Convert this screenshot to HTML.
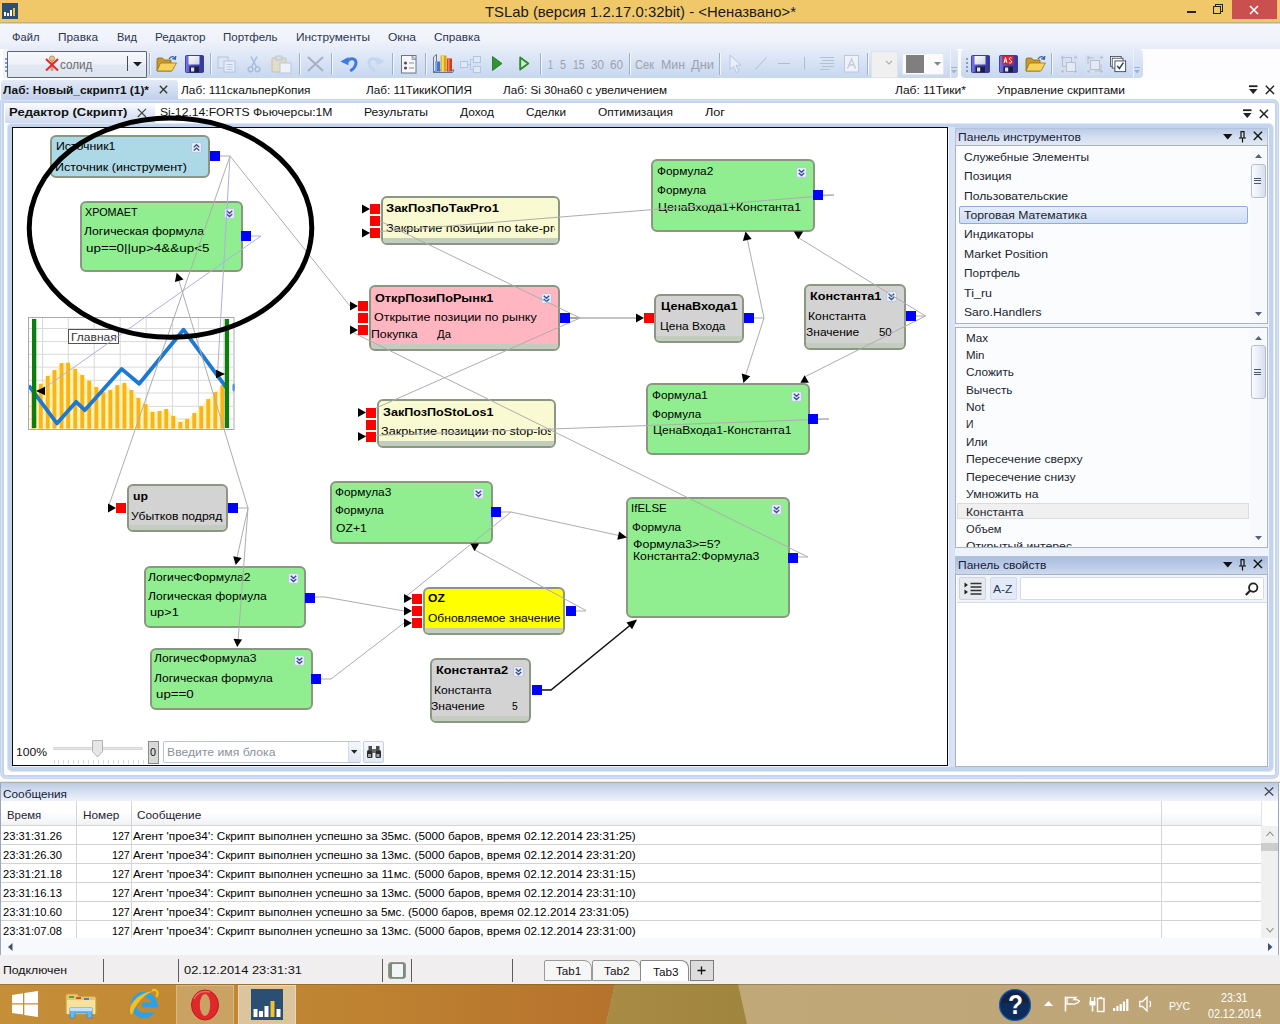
<!DOCTYPE html>
<html><head><meta charset="utf-8"><title>TSLab</title>
<style>
html,body{margin:0;padding:0;}
body{width:1280px;height:1024px;position:relative;overflow:hidden;background:#fff;font-family:"Liberation Sans", sans-serif;}
div,svg{box-sizing:border-box}
</style></head><body>
<div style="position:absolute;left:0px;top:0px;width:1280px;height:24px;background:linear-gradient(#f0c869,#f0c869 91%,#b9ae88 94%,#c9c4b4 97%,#eef0f8)"></div>
<div style="position:absolute;left:485.00px;top:3.00px;font-size:14.6px;line-height:18px;font-weight:400;color:#1a1a1a;white-space:pre;transform:scaleX(1.0184);transform-origin:0 0;">TSLab (версия 1.2.17.0:32bit) - &lt;Неназвано&gt;*</div>
<svg style="position:absolute;left:2px;top:3px" width="16" height="16"><rect width="16" height="16" fill="#2c4f73"/><rect x="2" y="9" width="2" height="4" fill="#fff"/><rect x="5" y="10" width="2" height="3" fill="#fff"/><rect x="8" y="7" width="2" height="6" fill="#fff"/><rect x="11" y="5" width="2" height="8" fill="#f4c430"/></svg>
<div style="position:absolute;left:1187px;top:11px;width:9px;height:2px;background:#222"></div>
<svg style="position:absolute;left:1212px;top:3px" width="12" height="12"><rect x="3.5" y="1.5" width="7" height="7" fill="none" stroke="#222"/><rect x="1.5" y="3.5" width="7" height="7" fill="#f0c869" stroke="#222"/></svg>
<div style="position:absolute;left:1232px;top:0px;width:45px;height:18.6px;background:#c9504e"></div>
<svg style="position:absolute;left:1249px;top:5px" width="10" height="10"><path d="M1 1L9 9M9 1L1 9" stroke="#fff" stroke-width="1.6"/></svg>
<div style="position:absolute;left:0px;top:24px;width:1280px;height:24.5px;background:linear-gradient(#f4f6fc,#eff2fb 70%,#e6ebf6)"></div>
<div style="position:absolute;left:12.00px;top:29.00px;font-size:11.8px;line-height:16px;font-weight:400;color:#2a3550;white-space:pre;transform:scaleX(0.9478);transform-origin:0 0;">Файл</div>
<div style="position:absolute;left:58.00px;top:29.00px;font-size:11.8px;line-height:16px;font-weight:400;color:#2a3550;white-space:pre;transform:scaleX(1.0035);transform-origin:0 0;">Правка</div>
<div style="position:absolute;left:117.00px;top:29.00px;font-size:11.8px;line-height:16px;font-weight:400;color:#2a3550;white-space:pre;transform:scaleX(0.9370);transform-origin:0 0;">Вид</div>
<div style="position:absolute;left:155.00px;top:29.00px;font-size:11.8px;line-height:16px;font-weight:400;color:#2a3550;white-space:pre;transform:scaleX(0.9942);transform-origin:0 0;">Редактор</div>
<div style="position:absolute;left:223.00px;top:29.00px;font-size:11.8px;line-height:16px;font-weight:400;color:#2a3550;white-space:pre;transform:scaleX(0.9792);transform-origin:0 0;">Портфель</div>
<div style="position:absolute;left:296.00px;top:29.00px;font-size:11.8px;line-height:16px;font-weight:400;color:#2a3550;white-space:pre;transform:scaleX(1.0059);transform-origin:0 0;">Инструменты</div>
<div style="position:absolute;left:388.00px;top:29.00px;font-size:11.8px;line-height:16px;font-weight:400;color:#2a3550;white-space:pre;transform:scaleX(1.0211);transform-origin:0 0;">Окна</div>
<div style="position:absolute;left:434.00px;top:29.00px;font-size:11.8px;line-height:16px;font-weight:400;color:#2a3550;white-space:pre;transform:scaleX(0.9939);transform-origin:0 0;">Справка</div>
<div style="position:absolute;left:0px;top:49px;width:1280px;height:31px;background:#fdfdff"></div>
<div style="position:absolute;left:3px;top:49px;width:955px;height:29px;background:linear-gradient(#e6edf9,#d4e0f3 55%,#c8d7ef);border-radius:4px"></div>
<div style="position:absolute;left:961px;top:49px;width:182px;height:29px;background:linear-gradient(#e6edf9,#d4e0f3 55%,#c8d7ef);border-radius:4px"></div>
<div style="position:absolute;left:2.5px;top:49px;width:5px;height:29px;background:#f1f4fa;border-radius:4px 0 0 4px"></div>
<div style="position:absolute;left:4.5px;top:57.5px;width:2px;height:2px;background:#8a9abb"></div>
<div style="position:absolute;left:4.5px;top:61.5px;width:2px;height:2px;background:#8a9abb"></div>
<div style="position:absolute;left:4.5px;top:65.5px;width:2px;height:2px;background:#8a9abb"></div>
<div style="position:absolute;left:4.5px;top:69.5px;width:2px;height:2px;background:#8a9abb"></div>
<div style="position:absolute;left:965.5px;top:57.5px;width:2px;height:2px;background:#8a9abb"></div>
<div style="position:absolute;left:965.5px;top:61.5px;width:2px;height:2px;background:#8a9abb"></div>
<div style="position:absolute;left:965.5px;top:65.5px;width:2px;height:2px;background:#8a9abb"></div>
<div style="position:absolute;left:965.5px;top:69.5px;width:2px;height:2px;background:#8a9abb"></div>
<div style="position:absolute;left:7px;top:50.5px;width:139.8px;height:27px;border:1.3px solid #60656f;background:linear-gradient(#f6f8fc,#edf1f8 48%,#e1e8f3 52%,#dde5f1);border-radius:1px"></div>
<svg style="position:absolute;left:45px;top:55px" width="14" height="17" viewBox="0 0 14 17"><circle cx="7" cy="3.5" r="2.6" fill="#e8c08a" stroke="#a87a3c" stroke-width="0.7"/><rect x="5.6" y="6" width="2.8" height="10" rx="1.2" fill="#c9a468"/><path d="M1 4 L13 15.5 M13 4 L1 15.5" stroke="#e8262c" stroke-width="2"/></svg>
<div style="position:absolute;left:60.00px;top:56.00px;font-size:13.4px;line-height:17px;font-weight:400;color:#6b6b6b;white-space:pre;transform:scaleX(0.8704);transform-origin:0 0;">солид</div>
<div style="position:absolute;left:127px;top:56px;width:1px;height:15px;background:#4a4a4a"></div>
<svg style="position:absolute;left:133px;top:62.2px" width="9" height="5" viewBox="0 0 9 5"><path d="M0 0 L9 0 L4.5 4.5 Z" fill="#1c1c1c"/></svg>
<div style="position:absolute;left:149px;top:53px;width:1px;height:22px;background:#9fb0cc"></div><div style="position:absolute;left:150px;top:53px;width:1px;height:22px;background:#f3f7fd"></div>
<svg style="position:absolute;left:156px;top:55px" width="22" height="18" viewBox="0 0 22 18"><path d="M1 4 L1 16 L15 16 L15 5 L8 5 L6.5 3 L2 3 Z" fill="#c89a2e" stroke="#8a6512" stroke-width="0.8"/><path d="M1 16 L4.5 8 L20.5 8 L16 16 Z" fill="#f6d35a" stroke="#9a7416" stroke-width="0.8"/><path d="M13 4 C15 1,18 1,19 3.5 M19.8 1 L19.3 4.2 L16.2 3.6" fill="none" stroke="#3d5ea8" stroke-width="1.3"/></svg>
<svg style="position:absolute;left:184.5px;top:55px" width="19" height="18" viewBox="0 0 19 18"><defs><linearGradient id="fg184" x1="0" x2="1"><stop offset="0" stop-color="#7a7ae2"/><stop offset="0.35" stop-color="#4a4ac6"/><stop offset="1" stop-color="#34349e"/></linearGradient><linearGradient id="fg184w" x1="0" y1="0" x2="1" y2="1"><stop offset="0" stop-color="#ffffff"/><stop offset="1" stop-color="#cfd2de"/></linearGradient></defs><rect x="0.5" y="0.5" width="18" height="17" rx="1" fill="url(#fg184)" stroke="#2b2b86" stroke-width="0.8"/><rect x="3.5" y="1" width="11" height="8.5" fill="url(#fg184w)"/><rect x="4.5" y="11.5" width="9.5" height="6" fill="#1d1d3c"/><rect x="6" y="12.5" width="3.2" height="4" fill="#dfe0ee"/></svg>
<div style="position:absolute;left:210px;top:53px;width:1px;height:22px;background:#9fb0cc"></div><div style="position:absolute;left:211px;top:53px;width:1px;height:22px;background:#f3f7fd"></div>
<svg style="position:absolute;left:217px;top:56px" width="20" height="17" viewBox="0 0 20 17"><rect x="1" y="1" width="10" height="11" fill="#dbe5f4" stroke="#b3c3dc"/><rect x="7" y="5" width="11" height="11" fill="#e6edf8" stroke="#b3c3dc"/><path d="M9.5 8.5h6M9.5 11h6M9.5 13.5h6" stroke="#b9c7dd"/></svg>
<svg style="position:absolute;left:247px;top:56px" width="14" height="17" viewBox="0 0 14 17"><path d="M4 0.5 L9.5 11 M10 0.5 L4.5 11" stroke="#a9bbd8" stroke-width="1.5" fill="none"/><circle cx="3.5" cy="13.3" r="2.4" fill="none" stroke="#a9bbd8" stroke-width="1.4"/><circle cx="10.5" cy="13.3" r="2.4" fill="none" stroke="#a9bbd8" stroke-width="1.4"/></svg>
<svg style="position:absolute;left:271px;top:55px" width="22" height="19" viewBox="0 0 22 19"><rect x="1" y="3" width="14" height="14" rx="1" fill="#e2dcc6" stroke="#c4c0ae"/><rect x="5" y="1" width="6" height="4" fill="#d9dde6" stroke="#bcc4d2"/><rect x="9" y="8" width="11" height="10" fill="#eef2f9" stroke="#b9c6dc"/></svg>
<div style="position:absolute;left:299px;top:53px;width:1px;height:22px;background:#9fb0cc"></div><div style="position:absolute;left:300px;top:53px;width:1px;height:22px;background:#f3f7fd"></div>
<svg style="position:absolute;left:306px;top:55px" width="19" height="18" viewBox="0 0 19 18"><path d="M2 2 L17 16 M17 2 L2 16" stroke="#a8b0c0" stroke-width="2"/></svg>
<div style="position:absolute;left:331px;top:53px;width:1px;height:22px;background:#9fb0cc"></div><div style="position:absolute;left:332px;top:53px;width:1px;height:22px;background:#f3f7fd"></div>
<svg style="position:absolute;left:339px;top:55px" width="19" height="18" viewBox="0 0 19 18"><path d="M9 5.8 C12.5 2.2 17.8 4 16.8 9 C16.2 12 14 14.2 12.3 15.3" fill="none" stroke="#3d7bdc" stroke-width="3" stroke-linecap="round"/><path d="M1.4 6.4 L9.6 2 L9.4 10.2 Z" fill="#3d7bdc"/></svg>
<svg style="position:absolute;left:366.5px;top:55px" width="19" height="18" viewBox="0 0 19 18"><g transform="translate(19,0) scale(-1,1)"><path d="M9 5.8 C12.5 2.2 17.8 4 16.8 9 C16.2 12 14 14.2 12.3 15.3" fill="none" stroke="#c3d5f0" stroke-width="3" stroke-linecap="round"/><path d="M1.4 6.4 L9.6 2 L9.4 10.2 Z" fill="#c3d5f0"/></g></svg>
<div style="position:absolute;left:392px;top:53px;width:1px;height:22px;background:#9fb0cc"></div><div style="position:absolute;left:393px;top:53px;width:1px;height:22px;background:#f3f7fd"></div>
<svg style="position:absolute;left:401px;top:55px" width="16" height="19" viewBox="0 0 16 19"><rect x="0.5" y="0.5" width="14.5" height="17.5" fill="#f6f7fa" stroke="#70757f"/><path d="M11 0.5 L15 4.5 L11 4.5Z" fill="#c9ced8" stroke="#70757f" stroke-width="0.6"/><circle cx="4.5" cy="8" r="1.6" fill="#555"/><circle cx="4.5" cy="13" r="1.6" fill="#555"/><path d="M8 8h5M8 13h5" stroke="#8a8f99" stroke-width="1.2"/></svg>
<div style="position:absolute;left:425px;top:53px;width:1px;height:22px;background:#9fb0cc"></div><div style="position:absolute;left:426px;top:53px;width:1px;height:22px;background:#f3f7fd"></div>
<svg style="position:absolute;left:432px;top:53px" width="23" height="22" viewBox="0 0 23 22"><path d="M1.5 4 L4.5 1.5 L4.5 17 L1.5 19.5 Z" fill="#dfe5ee" stroke="#5a6880" stroke-width="0.9"/><path d="M1.5 19.5 L4.5 17 L22 17 L20.5 19.5 Z" fill="#c9d0dc" stroke="#5a6880" stroke-width="0.9"/><rect x="3.5" y="8.5" width="4.6" height="10" fill="#3f74d6"/><rect x="3.5" y="8.5" width="1.6" height="10" fill="#7fa6ea"/><rect x="8.6" y="2.5" width="6" height="16" fill="#d9a514"/><rect x="9.6" y="2.5" width="2.2" height="16" fill="#f3dc68"/><rect x="15" y="5.5" width="5" height="13" fill="#d23a1a"/><rect x="15.8" y="5.5" width="1.8" height="13" fill="#ee7e5a"/></svg>
<svg style="position:absolute;left:460px;top:56px" width="22" height="17" viewBox="0 0 22 17"><rect x="0.5" y="5.5" width="7" height="6" fill="#dfe8f6" stroke="#b4c5e0"/><rect x="13.5" y="0.5" width="7" height="6" fill="#dfe8f6" stroke="#b4c5e0"/><rect x="13.5" y="10.5" width="7" height="6" fill="#dfe8f6" stroke="#b4c5e0"/><path d="M7.5 8.5 H10.5 V3.5 H13.5 M10.5 8.5 V13.5 H13.5" fill="none" stroke="#b4c5e0"/></svg>
<svg style="position:absolute;left:492px;top:56px" width="11" height="15" viewBox="0 0 11 15"><path d="M0.5 0.5 L10 7.5 L0.5 14.5 Z" fill="#2f962f" stroke="#1c6e1c" stroke-width="0.8"/></svg>
<svg style="position:absolute;left:519px;top:56px" width="11" height="15" viewBox="0 0 11 15"><path d="M1.2 1.4 L9.3 7.5 L1.2 13.6 Z" fill="#d4ead6" stroke="#2a8c2a" stroke-width="1.9" stroke-linejoin="round"/></svg>
<div style="position:absolute;left:540px;top:53px;width:1px;height:22px;background:#9fb0cc"></div><div style="position:absolute;left:541px;top:53px;width:1px;height:22px;background:#f3f7fd"></div>
<div style="position:absolute;left:548.00px;top:57.00px;font-size:12.4px;line-height:16px;font-weight:400;color:#9da2ac;white-space:pre;transform:scaleX(0.7240);transform-origin:0 0;">1</div>
<div style="position:absolute;left:560.00px;top:57.00px;font-size:12.4px;line-height:16px;font-weight:400;color:#9da2ac;white-space:pre;transform:scaleX(0.8688);transform-origin:0 0;">5</div>
<div style="position:absolute;left:572.50px;top:57.00px;font-size:12.4px;line-height:16px;font-weight:400;color:#9da2ac;white-space:pre;transform:scaleX(0.8335);transform-origin:0 0;">15</div>
<div style="position:absolute;left:591.00px;top:57.00px;font-size:12.4px;line-height:16px;font-weight:400;color:#9da2ac;white-space:pre;transform:scaleX(0.9422);transform-origin:0 0;">30</div>
<div style="position:absolute;left:610.00px;top:57.00px;font-size:12.4px;line-height:16px;font-weight:400;color:#9da2ac;white-space:pre;transform:scaleX(0.9422);transform-origin:0 0;">60</div>
<div style="position:absolute;left:635.00px;top:57.00px;font-size:12.4px;line-height:16px;font-weight:400;color:#9da2ac;white-space:pre;transform:scaleX(0.8935);transform-origin:0 0;">Сек</div>
<div style="position:absolute;left:661.00px;top:57.00px;font-size:12.4px;line-height:16px;font-weight:400;color:#9da2ac;white-space:pre;transform:scaleX(0.9961);transform-origin:0 0;">Мин</div>
<div style="position:absolute;left:691.00px;top:57.00px;font-size:12.4px;line-height:16px;font-weight:400;color:#9da2ac;white-space:pre;transform:scaleX(1.0381);transform-origin:0 0;">Дни</div>
<div style="position:absolute;left:629px;top:53px;width:1px;height:22px;background:#9fb0cc"></div><div style="position:absolute;left:630px;top:53px;width:1px;height:22px;background:#f3f7fd"></div>
<div style="position:absolute;left:719px;top:53px;width:1px;height:22px;background:#9fb0cc"></div><div style="position:absolute;left:720px;top:53px;width:1px;height:22px;background:#f3f7fd"></div>
<svg style="position:absolute;left:729px;top:54px" width="14" height="20" viewBox="0 0 14 20"><path d="M1 1 L1 15.5 L4.6 12.2 L7.4 18.5 L9.8 17.4 L7 11.4 L12 11.2 Z" fill="#e8effa" stroke="#b6c6e0" stroke-width="1"/></svg>
<svg style="position:absolute;left:755px;top:57px" width="12" height="13" viewBox="0 0 12 13"><path d="M0.5 12.5 L11.5 0.5" stroke="#b0bccf" stroke-width="1"/></svg>
<div style="position:absolute;left:777.5px;top:63px;width:12px;height:1px;background:#b0bccf"></div>
<div style="position:absolute;left:804px;top:57px;width:1px;height:13px;background:#b0bccf"></div>
<svg style="position:absolute;left:820px;top:56px" width="15" height="15" viewBox="0 0 15 15"><path d="M0 1.5h14M2 4.5h12M0 7.5h14M2 10.5h12M0 13.5h9" stroke="#b5c0d2" stroke-width="1"/></svg>
<svg style="position:absolute;left:844px;top:55px" width="16" height="18" viewBox="0 0 16 18"><rect x="0.5" y="0.5" width="14" height="16.5" fill="#eef2f9" stroke="#bcc8dc"/><path d="M3.5 13.5 L7.5 4 L11.5 13.5 M5 10h5" stroke="#c3ccdc" stroke-width="1.4" fill="none"/></svg>
<div style="position:absolute;left:867px;top:53px;width:1px;height:22px;background:#9fb0cc"></div><div style="position:absolute;left:868px;top:53px;width:1px;height:22px;background:#f3f7fd"></div>
<div style="position:absolute;left:871px;top:50.5px;width:27px;height:27px;background:#f0f0f0;border:1px solid #dfe3ea"></div>
<svg style="position:absolute;left:885px;top:60px" width="8" height="6" viewBox="0 0 8 6"><path d="M1 1 L4 4 L7 1" stroke="#b0b0b0" fill="none" stroke-width="1.1"/></svg>
<div style="position:absolute;left:902px;top:53px;width:42px;height:21.5px;background:#fbfbfb;border:1px solid #e3e6ec;border-radius:2px"></div>
<div style="position:absolute;left:906px;top:55px;width:18px;height:17.5px;background:#7f7f7f"></div>
<svg style="position:absolute;left:934px;top:62px" width="7" height="4" viewBox="0 0 7 4"><path d="M0 0 L7 0 L3.5 3.8Z" fill="#7a8597"/></svg>
<div style="position:absolute;left:950px;top:49px;width:8px;height:29px;background:linear-gradient(#e2eaf7,#cddaf0);border-left:1px solid #eef3fb;border-radius:0 4px 4px 0"></div>
<svg style="position:absolute;left:951px;top:67px" width="6" height="7" viewBox="0 0 6 7"><path d="M0 0.5h6" stroke="#9db2d6"/><path d="M0 3 L6 3 L3 6.5Z" fill="#9db2d6"/></svg>
<div style="position:absolute;left:1133px;top:49px;width:8px;height:29px;background:linear-gradient(#e2eaf7,#cddaf0);border-left:1px solid #eef3fb;border-radius:0 4px 4px 0"></div>
<svg style="position:absolute;left:1134px;top:67px" width="6" height="7" viewBox="0 0 6 7"><path d="M0 0.5h6" stroke="#9db2d6"/><path d="M0 3 L6 3 L3 6.5Z" fill="#9db2d6"/></svg>
<svg style="position:absolute;left:971px;top:55px" width="19" height="18" viewBox="0 0 19 18"><defs><linearGradient id="fg971" x1="0" x2="1"><stop offset="0" stop-color="#7a7ae2"/><stop offset="0.35" stop-color="#4a4ac6"/><stop offset="1" stop-color="#34349e"/></linearGradient><linearGradient id="fg971w" x1="0" y1="0" x2="1" y2="1"><stop offset="0" stop-color="#ffffff"/><stop offset="1" stop-color="#cfd2de"/></linearGradient></defs><rect x="0.5" y="0.5" width="18" height="17" rx="1" fill="url(#fg971)" stroke="#2b2b86" stroke-width="0.8"/><rect x="3.5" y="1" width="11" height="8.5" fill="url(#fg971w)"/><rect x="4.5" y="11.5" width="9.5" height="6" fill="#1d1d3c"/><rect x="6" y="12.5" width="3.2" height="4" fill="#dfe0ee"/></svg>
<svg style="position:absolute;left:999px;top:55px" width="19" height="18" viewBox="0 0 19 18"><defs><linearGradient id="fg999" x1="0" x2="1"><stop offset="0" stop-color="#7a7ae2"/><stop offset="0.35" stop-color="#4a4ac6"/><stop offset="1" stop-color="#34349e"/></linearGradient><linearGradient id="fg999w" x1="0" y1="0" x2="1" y2="1"><stop offset="0" stop-color="#ffffff"/><stop offset="1" stop-color="#cfd2de"/></linearGradient></defs><rect x="0.5" y="0.5" width="18" height="17" rx="1" fill="url(#fg999)" stroke="#2b2b86" stroke-width="0.8"/><rect x="3.5" y="1" width="11" height="8.5" fill="#d8222c"/><path d="M5 8 L6.5 2.5 L8 8 M5.6 6h1.8 M12.6 3.2 C11.5 2.2 9.8 2.8 10.2 4.2 C10.6 5.4 12.6 5.2 12.6 6.8 C12.6 8.2 10.6 8.4 9.8 7.4" fill="none" stroke="#fff" stroke-width="1"/><rect x="4.5" y="11.5" width="9.5" height="6" fill="#1d1d3c"/><rect x="6" y="12.5" width="3.2" height="4" fill="#dfe0ee"/></svg>
<svg style="position:absolute;left:1025px;top:55px" width="22" height="18" viewBox="0 0 22 18"><path d="M1 4 L1 16 L15 16 L15 5 L8 5 L6.5 3 L2 3 Z" fill="#c89a2e" stroke="#8a6512" stroke-width="0.8"/><path d="M1 16 L4.5 8 L20.5 8 L16 16 Z" fill="#f6d35a" stroke="#9a7416" stroke-width="0.8"/><path d="M13 4 C15 1,18 1,19 3.5 M19.8 1 L19.3 4.2 L16.2 3.6" fill="none" stroke="#3d5ea8" stroke-width="1.3"/></svg>
<div style="position:absolute;left:1051px;top:53px;width:1px;height:22px;background:#9fb0cc"></div><div style="position:absolute;left:1052px;top:53px;width:1px;height:22px;background:#f3f7fd"></div>
<svg style="position:absolute;left:1059px;top:54px" width="19" height="21" viewBox="0 0 19 21"><rect x="0" y="0" width="19" height="21" fill="#d6dfee" opacity="0.6"/><rect x="3.5" y="3.5" width="9" height="9" fill="none" stroke="#b4bfd4"/><rect x="7.5" y="8.5" width="9" height="9" fill="#e4eaf4" stroke="#b4bfd4"/><circle cx="3.5" cy="3.5" r="1.3" fill="#b4bfd4"/><circle cx="16.5" cy="3.5" r="1.3" fill="#b4bfd4"/><circle cx="3.5" cy="17.5" r="1.3" fill="#b4bfd4"/><circle cx="16.5" cy="17.5" r="1.3" fill="#b4bfd4"/></svg>
<svg style="position:absolute;left:1085px;top:54px" width="19" height="21" viewBox="0 0 19 21"><rect x="0" y="0" width="19" height="21" fill="#d6dfee" opacity="0.6"/><rect x="5.5" y="6.5" width="9" height="9" fill="#e4eaf4" stroke="#b4bfd4"/><path d="M3 4h6M3 4v6M16 10v7M10 17h6" stroke="#b4bfd4" fill="none"/><circle cx="3.5" cy="3.5" r="1.3" fill="#b4bfd4"/><circle cx="16.5" cy="3.5" r="1.3" fill="#b4bfd4"/><circle cx="3.5" cy="17.5" r="1.3" fill="#b4bfd4"/><circle cx="16.5" cy="17.5" r="1.3" fill="#b4bfd4"/></svg>
<svg style="position:absolute;left:1110px;top:56px" width="17" height="17" viewBox="0 0 19 19"><rect x="0.5" y="0.5" width="12" height="11" fill="#fff" stroke="#4a5260"/><rect x="2.5" y="2.5" width="12" height="11" fill="#fff" stroke="#4a5260"/><rect x="5.5" y="5.5" width="12" height="12" fill="#fff" stroke="#3a4250"/><path d="M8 11 L10.5 14 L15 7.5" fill="none" stroke="#2a3a6a" stroke-width="1.6"/></svg>
<div style="position:absolute;left:1px;top:80px;width:177px;height:19px;background:linear-gradient(#e3eaf7,#c2d1ea);border-radius:3px 3px 0 0"></div>
<div style="position:absolute;left:3.00px;top:82.00px;font-size:11.8px;line-height:16px;font-weight:700;color:#111;white-space:pre;transform:scaleX(1.0057);transform-origin:0 0;">Лаб: Новый_скрипт1 (1)*</div>
<svg style="position:absolute;left:159px;top:85px" width="9" height="9" viewBox="0 0 9 9"><path d="M0.8 0.8 L8.2 8.2 M8.2 0.8 L0.8 8.2" stroke="#333" stroke-width="1.3"/></svg>
<div style="position:absolute;left:180.50px;top:82.00px;font-size:11.8px;line-height:16px;font-weight:400;color:#111;white-space:pre;transform:scaleX(1.0057);transform-origin:0 0;">Лаб: 111скальперКопия</div>
<div style="position:absolute;left:366.00px;top:82.00px;font-size:11.8px;line-height:16px;font-weight:400;color:#111;white-space:pre;transform:scaleX(0.9974);transform-origin:0 0;">Лаб: 11ТикиКОПИЯ</div>
<div style="position:absolute;left:503.00px;top:82.00px;font-size:11.8px;line-height:16px;font-weight:400;color:#111;white-space:pre;transform:scaleX(0.9921);transform-origin:0 0;">Лаб: Si 30на60 с увеличением</div>
<div style="position:absolute;left:895.00px;top:82.00px;font-size:11.8px;line-height:16px;font-weight:400;color:#111;white-space:pre;transform:scaleX(1.0218);transform-origin:0 0;">Лаб: 11Тики*</div>
<div style="position:absolute;left:997.00px;top:82.00px;font-size:11.8px;line-height:16px;font-weight:400;color:#111;white-space:pre;transform:scaleX(1.0159);transform-origin:0 0;">Управление скриптами</div>
<svg style="position:absolute;left:1249px;top:85px" width="9" height="10" viewBox="0 0 9 10"><path d="M0 1.2h8.5" stroke="#222" stroke-width="1.8"/><path d="M0 4 L8.5 4 L4.25 9 Z" fill="#222"/></svg><svg style="position:absolute;left:1265px;top:85px" width="10" height="10" viewBox="0 0 10 10"><path d="M0.8 0.8 L9 9 M9 0.8 L0.8 9" stroke="#222" stroke-width="1.5"/></svg>
<div style="position:absolute;left:0px;top:98.5px;width:1279px;height:680px;border:4.5px solid #c5d4ee;border-radius:3px 6px 6px 6px;background:#fff"></div>
<div style="position:absolute;left:1px;top:99.5px;width:1277px;height:678px;border:1.5px solid #d9e3f5;border-radius:3px 6px 6px 6px;"></div>
<div style="position:absolute;left:4.7px;top:103px;width:150.5px;height:19.6px;background:linear-gradient(#fcfdff,#e3eaf7 45%,#cfdbf0);border-radius:2px 2px 0 0"></div>
<div style="position:absolute;left:9.40px;top:104.00px;font-size:11.8px;line-height:16px;font-weight:700;color:#111;white-space:pre;transform:scaleX(1.1061);transform-origin:0 0;">Редактор (Скрипт)</div>
<svg style="position:absolute;left:137px;top:108px" width="10" height="10" viewBox="0 0 10 10"><path d="M0.8 0.8 L9 9 M9 0.8 L0.8 9" stroke="#444" stroke-width="1.2"/></svg>
<div style="position:absolute;left:160.00px;top:104.00px;font-size:11.8px;line-height:16px;font-weight:400;color:#111;white-space:pre;transform:scaleX(1.0312);transform-origin:0 0;">Si-12.14:FORTS Фьючерсы:1М</div>
<div style="position:absolute;left:364.00px;top:104.00px;font-size:11.8px;line-height:16px;font-weight:400;color:#111;white-space:pre;transform:scaleX(1.0299);transform-origin:0 0;">Результаты</div>
<div style="position:absolute;left:460.00px;top:104.00px;font-size:11.8px;line-height:16px;font-weight:400;color:#111;white-space:pre;transform:scaleX(1.0145);transform-origin:0 0;">Доход</div>
<div style="position:absolute;left:526.00px;top:104.00px;font-size:11.8px;line-height:16px;font-weight:400;color:#111;white-space:pre;transform:scaleX(0.9946);transform-origin:0 0;">Сделки</div>
<div style="position:absolute;left:598.00px;top:104.00px;font-size:11.8px;line-height:16px;font-weight:400;color:#111;white-space:pre;transform:scaleX(1.0139);transform-origin:0 0;">Оптимизация</div>
<div style="position:absolute;left:705.00px;top:104.00px;font-size:11.8px;line-height:16px;font-weight:400;color:#111;white-space:pre;transform:scaleX(1.0747);transform-origin:0 0;">Лог</div>
<svg style="position:absolute;left:1243px;top:109px" width="9" height="10" viewBox="0 0 9 10"><path d="M0 1.2h8.5" stroke="#222" stroke-width="1.8"/><path d="M0 4 L8.5 4 L4.25 9 Z" fill="#222"/></svg><svg style="position:absolute;left:1259px;top:109px" width="10" height="10" viewBox="0 0 10 10"><path d="M0.8 0.8 L9 9 M9 0.8 L0.8 9" stroke="#222" stroke-width="1.5"/></svg>
<div style="position:absolute;left:6.5px;top:122.5px;width:1267px;height:649px;border:5px solid #c5d4ee;border-radius:5px 6px 6px 6px;background:#eef3fb"></div>
<div style="position:absolute;left:6.5px;top:122.5px;width:1267px;height:649px;border:1.5px solid #dfe8f7;border-radius:5px 6px 6px 6px;"></div>
<div style="position:absolute;left:11.8px;top:127px;width:936.5px;height:639px;border:1.6px solid #0a0a0a;background:#fff"></div>
<div style="position:absolute;left:948.5px;top:127px;width:6px;height:640px;background:#d8e3f6"></div>
<div style="position:absolute;left:955px;top:128px;width:313px;height:17.5px;background:linear-gradient(#bdcce7,#d5dff0 50%,#e4eaf6);border:1px solid #b4c2da;border-bottom:none"></div>
<div style="position:absolute;left:957.50px;top:130.00px;font-size:10.9px;line-height:14px;font-weight:400;color:#15203a;white-space:pre;transform:scaleX(1.1111);transform-origin:0 0;">Панель инструментов</div>
<svg style="position:absolute;left:1222.5px;top:134px" width="10" height="6" viewBox="0 0 10 6"><path d="M0 0 L9.5 0 L4.75 5.5 Z" fill="#111"/></svg><svg style="position:absolute;left:1238.5px;top:131px" width="7" height="12" viewBox="0 0 7 12"><path d="M1.5 0.6h4M2 0.6v6M5 0.6v6.2M0 7h7M3.5 7v4.5" stroke="#111" stroke-width="1.2" fill="none"/></svg><svg style="position:absolute;left:1252.5px;top:131px" width="10" height="10" viewBox="0 0 10 10"><path d="M0.8 0.8 L9 9 M9 0.8 L0.8 9" stroke="#111" stroke-width="1.4"/></svg>
<div style="position:absolute;left:955px;top:145px;width:313px;height:179px;background:#fbfcfe;border:1.5px solid #a9b3c4"></div>
<div style="position:absolute;left:958.5px;top:205.5px;width:289px;height:18px;background:linear-gradient(#e4edfb,#cfdef6);border:1px solid #93abd6;border-radius:2px"></div>
<div style="position:absolute;left:964.00px;top:151.00px;font-size:10.3px;line-height:13px;font-weight:400;color:#20242c;white-space:pre;transform:scaleX(1.1554);transform-origin:0 0;">Служебные Элементы</div>
<div style="position:absolute;left:964.00px;top:170.00px;font-size:10.3px;line-height:13px;font-weight:400;color:#20242c;white-space:pre;transform:scaleX(1.1665);transform-origin:0 0;">Позиция</div>
<div style="position:absolute;left:964.00px;top:190.00px;font-size:10.3px;line-height:13px;font-weight:400;color:#20242c;white-space:pre;transform:scaleX(1.1824);transform-origin:0 0;">Пользовательские</div>
<div style="position:absolute;left:964.00px;top:209.00px;font-size:10.3px;line-height:13px;font-weight:400;color:#20242c;white-space:pre;transform:scaleX(1.1855);transform-origin:0 0;">Торговая Математика</div>
<div style="position:absolute;left:964.00px;top:228.00px;font-size:10.3px;line-height:13px;font-weight:400;color:#20242c;white-space:pre;transform:scaleX(1.1871);transform-origin:0 0;">Индикаторы</div>
<div style="position:absolute;left:964.00px;top:248.00px;font-size:10.3px;line-height:13px;font-weight:400;color:#20242c;white-space:pre;transform:scaleX(1.1836);transform-origin:0 0;">Market Position</div>
<div style="position:absolute;left:964.00px;top:267.00px;font-size:10.3px;line-height:13px;font-weight:400;color:#20242c;white-space:pre;transform:scaleX(1.1528);transform-origin:0 0;">Портфель</div>
<div style="position:absolute;left:964.00px;top:287.00px;font-size:10.3px;line-height:13px;font-weight:400;color:#20242c;white-space:pre;transform:scaleX(1.2133);transform-origin:0 0;">Ti_ru</div>
<div style="position:absolute;left:964.00px;top:306.00px;font-size:10.3px;line-height:13px;font-weight:400;color:#20242c;white-space:pre;transform:scaleX(1.1773);transform-origin:0 0;">Saro.Handlers</div>
<div style="position:absolute;left:1250px;top:147px;width:16px;height:175px;background:#f7f9fc"></div><svg style="position:absolute;left:1254.5px;top:153.5px" width="7" height="4" viewBox="0 0 7 4"><path d="M0 4 L3.5 0 L7 4Z" fill="#56627a"/></svg><svg style="position:absolute;left:1254.5px;top:311.5px" width="7" height="4" viewBox="0 0 7 4"><path d="M0 0 L3.5 4 L7 0Z" fill="#56627a"/></svg><div style="position:absolute;left:1250.5px;top:164px;width:15px;height:33.5px;border:1px solid #b5bfd2;border-radius:3px;background:linear-gradient(90deg,#fafbfe,#e6ebf5 60%,#d6deee)"></div><div style="position:absolute;left:1254px;top:177.75px;width:7px;height:1px;background:#4b566c"></div><div style="position:absolute;left:1254px;top:180.25px;width:7px;height:1px;background:#4b566c"></div><div style="position:absolute;left:1254px;top:182.75px;width:7px;height:1px;background:#4b566c"></div>
<div style="position:absolute;left:955px;top:327px;width:313px;height:221px;background:#fbfcfe;border:1.5px solid #a9b3c4;overflow:hidden"></div>
<div style="position:absolute;left:957px;top:502.7px;width:292px;height:16.5px;background:#f0f0f0;border:1px solid #dcdcdc"></div>
<div style="position:absolute;left:956px;top:328px;width:292px;height:218.5px;overflow:hidden">
<div style="position:absolute;left:10.00px;top:4.00px;font-size:10.3px;line-height:13px;font-weight:400;color:#20242c;white-space:pre;transform:scaleX(1.1309);transform-origin:0 0;">Max</div>
<div style="position:absolute;left:10.00px;top:21.00px;font-size:10.3px;line-height:13px;font-weight:400;color:#20242c;white-space:pre;transform:scaleX(1.1149);transform-origin:0 0;">Min</div>
<div style="position:absolute;left:10.00px;top:38.00px;font-size:10.3px;line-height:13px;font-weight:400;color:#20242c;white-space:pre;transform:scaleX(1.1454);transform-origin:0 0;">Сложить</div>
<div style="position:absolute;left:10.00px;top:56.00px;font-size:10.3px;line-height:13px;font-weight:400;color:#20242c;white-space:pre;transform:scaleX(1.1455);transform-origin:0 0;">Вычесть</div>
<div style="position:absolute;left:10.00px;top:73.00px;font-size:10.3px;line-height:13px;font-weight:400;color:#20242c;white-space:pre;transform:scaleX(1.1540);transform-origin:0 0;">Not</div>
<div style="position:absolute;left:10.00px;top:90.00px;font-size:10.3px;line-height:13px;font-weight:400;color:#20242c;white-space:pre;transform:scaleX(1.0127);transform-origin:0 0;">И</div>
<div style="position:absolute;left:10.00px;top:108.00px;font-size:10.3px;line-height:13px;font-weight:400;color:#20242c;white-space:pre;transform:scaleX(1.1214);transform-origin:0 0;">Или</div>
<div style="position:absolute;left:10.00px;top:125.00px;font-size:10.3px;line-height:13px;font-weight:400;color:#20242c;white-space:pre;transform:scaleX(1.1842);transform-origin:0 0;">Пересечение сверху</div>
<div style="position:absolute;left:10.00px;top:143.00px;font-size:10.3px;line-height:13px;font-weight:400;color:#20242c;white-space:pre;transform:scaleX(1.1828);transform-origin:0 0;">Пересечение снизу</div>
<div style="position:absolute;left:10.00px;top:160.00px;font-size:10.3px;line-height:13px;font-weight:400;color:#20242c;white-space:pre;transform:scaleX(1.1798);transform-origin:0 0;">Умножить на</div>
<div style="position:absolute;left:10.00px;top:178.00px;font-size:10.3px;line-height:13px;font-weight:400;color:#20242c;white-space:pre;transform:scaleX(1.1757);transform-origin:0 0;">Константа</div>
<div style="position:absolute;left:10.00px;top:195.00px;font-size:10.3px;line-height:13px;font-weight:400;color:#20242c;white-space:pre;transform:scaleX(1.0819);transform-origin:0 0;">Объем</div>
<div style="position:absolute;left:10.00px;top:212.00px;font-size:10.3px;line-height:13px;font-weight:400;color:#20242c;white-space:pre;transform:scaleX(1.1848);transform-origin:0 0;">Открытый интерес</div>
</div>
<div style="position:absolute;left:1250px;top:329px;width:16px;height:217px;background:#f7f9fc"></div><svg style="position:absolute;left:1254.5px;top:335.5px" width="7" height="4" viewBox="0 0 7 4"><path d="M0 4 L3.5 0 L7 4Z" fill="#56627a"/></svg><svg style="position:absolute;left:1254.5px;top:535.5px" width="7" height="4" viewBox="0 0 7 4"><path d="M0 0 L3.5 4 L7 0Z" fill="#56627a"/></svg><div style="position:absolute;left:1250.5px;top:345.4px;width:15px;height:53.400000000000034px;border:1px solid #b5bfd2;border-radius:3px;background:linear-gradient(90deg,#fafbfe,#e6ebf5 60%,#d6deee)"></div><div style="position:absolute;left:1254px;top:369.1px;width:7px;height:1px;background:#4b566c"></div><div style="position:absolute;left:1254px;top:371.6px;width:7px;height:1px;background:#4b566c"></div><div style="position:absolute;left:1254px;top:374.1px;width:7px;height:1px;background:#4b566c"></div>
<div style="position:absolute;left:955px;top:555.5px;width:313px;height:18px;background:linear-gradient(#a9bddf,#b9c9e5 45%,#ccd8ed);border:1px solid #b4c2da;border-bottom:none"></div>
<div style="position:absolute;left:957.50px;top:558.00px;font-size:10.9px;line-height:14px;font-weight:400;color:#15203a;white-space:pre;transform:scaleX(1.1045);transform-origin:0 0;">Панель свойств</div>
<svg style="position:absolute;left:1222.5px;top:562px" width="10" height="6" viewBox="0 0 10 6"><path d="M0 0 L9.5 0 L4.75 5.5 Z" fill="#111"/></svg><svg style="position:absolute;left:1238.5px;top:559px" width="7" height="12" viewBox="0 0 7 12"><path d="M1.5 0.6h4M2 0.6v6M5 0.6v6.2M0 7h7M3.5 7v4.5" stroke="#111" stroke-width="1.2" fill="none"/></svg><svg style="position:absolute;left:1252.5px;top:559px" width="10" height="10" viewBox="0 0 10 10"><path d="M0.8 0.8 L9 9 M9 0.8 L0.8 9" stroke="#111" stroke-width="1.4"/></svg>
<div style="position:absolute;left:955px;top:573.5px;width:313px;height:193px;background:#fff;border:1.5px solid #a9b3c4"></div>
<div style="position:absolute;left:956.5px;top:575px;width:310px;height:27.5px;background:#f1f4fa;border-bottom:1px solid #d5dbe6"></div>
<div style="position:absolute;left:958.5px;top:577px;width:27px;height:22.5px;background:#e6e9ee;border:1px solid #cfd4dc;border-radius:2px"></div>
<svg style="position:absolute;left:963.5px;top:582px" width="18" height="13" viewBox="0 0 18 13"><path d="M0.5 0.5 L4 3 L0.5 5.5Z M0.5 7.5 L4 10 L0.5 12.5Z" fill="#222"/><path d="M6.5 1.5h11M6.5 5h11M6.5 8.5h11M6.5 12h11" stroke="#333" stroke-width="1.3"/></svg>
<div style="position:absolute;left:989.5px;top:577px;width:27px;height:22.5px;background:#e3ebf8;border:1px solid #d2dbe9;border-radius:2px"></div>
<div style="position:absolute;left:993.00px;top:582.00px;font-size:10.8px;line-height:14px;font-weight:400;color:#2a3550;white-space:pre;transform:scaleX(1.1203);transform-origin:0 0;">A-Z</div>
<div style="position:absolute;left:1019.5px;top:577px;width:244px;height:22.5px;background:#fff;border:1px solid #d5dae3;border-radius:2px"></div>
<svg style="position:absolute;left:1245px;top:581.5px" width="14" height="14" viewBox="0 0 14 14"><circle cx="8.2" cy="5.6" r="4.2" fill="none" stroke="#222" stroke-width="1.8"/><path d="M5 8.8 L0.8 13" stroke="#222" stroke-width="2.2"/></svg>
<div style="position:absolute;left:16.00px;top:745.00px;font-size:11.6px;line-height:14px;font-weight:400;color:#111;white-space:pre;transform:scaleX(1.0453);transform-origin:0 0;">100%</div>
<div style="position:absolute;left:53px;top:746.5px;width:90px;height:3.5px;background:#e7e7e7;border:1px solid #d6d6d6;border-radius:1px"></div>
<svg style="position:absolute;left:92px;top:740px" width="12" height="18" viewBox="0 0 12 18"><path d="M0.5 0.5 L10.5 0.5 L10.5 11.5 L5.5 17 L0.5 11.5 Z" fill="#e6e6e6" stroke="#b3b3b3"/></svg>
<div style="position:absolute;left:53.5px;top:760px;width:1px;height:4px;background:#dadada"></div>
<div style="position:absolute;left:58.45px;top:760px;width:1px;height:4px;background:#dadada"></div>
<div style="position:absolute;left:63.4px;top:760px;width:1px;height:4px;background:#dadada"></div>
<div style="position:absolute;left:68.35px;top:760px;width:1px;height:4px;background:#dadada"></div>
<div style="position:absolute;left:73.3px;top:760px;width:1px;height:4px;background:#dadada"></div>
<div style="position:absolute;left:78.25px;top:760px;width:1px;height:4px;background:#dadada"></div>
<div style="position:absolute;left:83.2px;top:760px;width:1px;height:4px;background:#dadada"></div>
<div style="position:absolute;left:88.15px;top:760px;width:1px;height:4px;background:#dadada"></div>
<div style="position:absolute;left:93.1px;top:760px;width:1px;height:4px;background:#dadada"></div>
<div style="position:absolute;left:98.05000000000001px;top:760px;width:1px;height:4px;background:#dadada"></div>
<div style="position:absolute;left:103.0px;top:760px;width:1px;height:4px;background:#dadada"></div>
<div style="position:absolute;left:107.95px;top:760px;width:1px;height:4px;background:#dadada"></div>
<div style="position:absolute;left:112.9px;top:760px;width:1px;height:4px;background:#dadada"></div>
<div style="position:absolute;left:117.85000000000001px;top:760px;width:1px;height:4px;background:#dadada"></div>
<div style="position:absolute;left:122.8px;top:760px;width:1px;height:4px;background:#dadada"></div>
<div style="position:absolute;left:127.75px;top:760px;width:1px;height:4px;background:#dadada"></div>
<div style="position:absolute;left:132.7px;top:760px;width:1px;height:4px;background:#dadada"></div>
<div style="position:absolute;left:137.65px;top:760px;width:1px;height:4px;background:#dadada"></div>
<div style="position:absolute;left:142.60000000000002px;top:760px;width:1px;height:4px;background:#dadada"></div>
<div style="position:absolute;left:148px;top:740.5px;width:10.5px;height:23px;background:#d8d8d8;border:1px solid #8a8a8a"></div>
<div style="position:absolute;left:150.30px;top:745.00px;font-size:11px;line-height:14px;font-weight:400;color:#111;white-space:pre;transform:scaleX(0.9796);transform-origin:0 0;">0</div>
<div style="position:absolute;left:162.5px;top:741px;width:198.5px;height:22px;background:#fff;border:1px solid #b8c4d8;border-radius:2px"></div>
<div style="position:absolute;left:167.00px;top:745.00px;font-size:10.6px;line-height:14px;font-weight:400;color:#8d939c;white-space:pre;transform:scaleX(1.1502);transform-origin:0 0;">Введите имя блока</div>
<div style="position:absolute;left:347.5px;top:742px;width:13px;height:20px;background:linear-gradient(#f4f7fc,#dfe7f4);border-left:1px solid #d4dbe8"></div>
<svg style="position:absolute;left:350.5px;top:750px" width="7" height="4" viewBox="0 0 7 4"><path d="M0 0 L6.5 0 L3.25 3.8Z" fill="#222"/></svg>
<div style="position:absolute;left:362.5px;top:741px;width:21.5px;height:22px;background:linear-gradient(#f7f9fd,#e3eaf5);border:1px solid #c5cfe0;border-radius:2px"></div>
<svg style="position:absolute;left:365.5px;top:744.5px" width="16" height="14" viewBox="0 0 16 14"><rect x="1" y="5" width="5.5" height="8" rx="1.5" fill="#2a2a2a"/><rect x="9.5" y="5" width="5.5" height="8" rx="1.5" fill="#2a2a2a"/><rect x="2.5" y="1" width="3.5" height="5" fill="#4a4a4a"/><rect x="10" y="1" width="3.5" height="5" fill="#4a4a4a"/><rect x="6" y="4" width="4" height="4" fill="#6a6a6a"/><rect x="2" y="9" width="3" height="3" fill="#9aa"/><rect x="10.5" y="9" width="3" height="3" fill="#9aa"/></svg>
<div style="position:absolute;left:0px;top:778.5px;width:1280px;height:4px;background:linear-gradient(#fdfdfd,#f2f2f2 60%,#8e8e8e)"></div>
<div style="position:absolute;left:0px;top:782.5px;width:1279px;height:18.5px;background:linear-gradient(#bccbe5,#d6e0f1 50%,#eef2fa);border-left:1px solid #9aa6ba;border-right:1px solid #9aa6ba"></div>
<div style="position:absolute;left:3.00px;top:786.00px;font-size:11.8px;line-height:16px;font-weight:400;color:#15203a;white-space:pre;transform:scaleX(0.9995);transform-origin:0 0;">Сообщения</div>
<svg style="position:absolute;left:1264px;top:786.5px" width="10" height="9" viewBox="0 0 10 9"><path d="M0.8 0.5 L9.2 8.5 M9.2 0.5 L0.8 8.5" stroke="#3c4250" stroke-width="1.2"/></svg>
<div style="position:absolute;left:0px;top:801px;width:1279px;height:154px;background:#fff;border-left:1px solid #9aa6ba;border-right:1px solid #9aa6ba;border-bottom:1px solid #9aa6ba"></div>
<div style="position:absolute;left:1px;top:801px;width:1260px;height:24.5px;background:linear-gradient(#fff,#fff 45%,#f1f2f4);border-bottom:1px solid #d5d5d5"></div>
<div style="position:absolute;left:76px;top:801px;width:1px;height:137px;background:#d6d6d6"></div>
<div style="position:absolute;left:130.5px;top:801px;width:1px;height:137px;background:#d6d6d6"></div>
<div style="position:absolute;left:1161px;top:801px;width:1px;height:137px;background:#d6d6d6"></div>
<div style="position:absolute;left:1260.5px;top:801px;width:1px;height:24.5px;background:#e3e3e3"></div>
<div style="position:absolute;left:1px;top:844.3px;width:1260px;height:1px;background:#d3d3d3"></div>
<div style="position:absolute;left:1px;top:863.3px;width:1260px;height:1px;background:#d3d3d3"></div>
<div style="position:absolute;left:1px;top:882.3px;width:1260px;height:1px;background:#d3d3d3"></div>
<div style="position:absolute;left:1px;top:901.2px;width:1260px;height:1px;background:#d3d3d3"></div>
<div style="position:absolute;left:1px;top:920.3px;width:1260px;height:1px;background:#d3d3d3"></div>
<div style="position:absolute;left:7.00px;top:807.00px;font-size:11.8px;line-height:16px;font-weight:400;color:#1c2238;white-space:pre;transform:scaleX(0.9648);transform-origin:0 0;">Время</div>
<div style="position:absolute;left:82.50px;top:807.00px;font-size:11.8px;line-height:16px;font-weight:400;color:#1c2238;white-space:pre;transform:scaleX(0.9983);transform-origin:0 0;">Номер</div>
<div style="position:absolute;left:137.00px;top:807.00px;font-size:11.8px;line-height:16px;font-weight:400;color:#1c2238;white-space:pre;transform:scaleX(1.0007);transform-origin:0 0;">Сообщение</div>
<div style="position:absolute;left:0;top:826px;width:1260px;height:112px;overflow:hidden">
<div style="position:absolute;left:3.00px;top:2.00px;font-size:11.8px;line-height:16px;font-weight:400;color:#000;white-space:pre;transform:scaleX(0.9466);transform-origin:0 0;">23:31:31.26</div>
<div style="position:absolute;left:111.75px;top:2.00px;font-size:11.8px;line-height:16px;font-weight:400;color:#000;white-space:pre;transform:scaleX(0.9016);transform-origin:0 0;">127</div>
<div style="position:absolute;left:133.25px;top:2.00px;font-size:11.8px;line-height:16px;font-weight:400;color:#000;white-space:pre;transform:scaleX(0.9972);transform-origin:0 0;">Агент 'прое34': Скрипт выполнен успешно за 35мс. (5000 баров, время 02.12.2014 23:31:25)</div>
<div style="position:absolute;left:3.00px;top:21.00px;font-size:11.8px;line-height:16px;font-weight:400;color:#000;white-space:pre;transform:scaleX(0.9466);transform-origin:0 0;">23:31:26.30</div>
<div style="position:absolute;left:111.75px;top:21.00px;font-size:11.8px;line-height:16px;font-weight:400;color:#000;white-space:pre;transform:scaleX(0.9016);transform-origin:0 0;">127</div>
<div style="position:absolute;left:133.25px;top:21.00px;font-size:11.8px;line-height:16px;font-weight:400;color:#000;white-space:pre;transform:scaleX(0.9972);transform-origin:0 0;">Агент 'прое34': Скрипт выполнен успешно за 13мс. (5000 баров, время 02.12.2014 23:31:20)</div>
<div style="position:absolute;left:3.00px;top:40.00px;font-size:11.8px;line-height:16px;font-weight:400;color:#000;white-space:pre;transform:scaleX(0.9466);transform-origin:0 0;">23:31:21.18</div>
<div style="position:absolute;left:111.75px;top:40.00px;font-size:11.8px;line-height:16px;font-weight:400;color:#000;white-space:pre;transform:scaleX(0.9016);transform-origin:0 0;">127</div>
<div style="position:absolute;left:133.25px;top:40.00px;font-size:11.8px;line-height:16px;font-weight:400;color:#000;white-space:pre;transform:scaleX(0.9989);transform-origin:0 0;">Агент 'прое34': Скрипт выполнен успешно за 11мс. (5000 баров, время 02.12.2014 23:31:15)</div>
<div style="position:absolute;left:3.00px;top:59.00px;font-size:11.8px;line-height:16px;font-weight:400;color:#000;white-space:pre;transform:scaleX(0.9466);transform-origin:0 0;">23:31:16.13</div>
<div style="position:absolute;left:111.75px;top:59.00px;font-size:11.8px;line-height:16px;font-weight:400;color:#000;white-space:pre;transform:scaleX(0.9016);transform-origin:0 0;">127</div>
<div style="position:absolute;left:133.25px;top:59.00px;font-size:11.8px;line-height:16px;font-weight:400;color:#000;white-space:pre;transform:scaleX(0.9972);transform-origin:0 0;">Агент 'прое34': Скрипт выполнен успешно за 13мс. (5000 баров, время 02.12.2014 23:31:10)</div>
<div style="position:absolute;left:3.00px;top:78.00px;font-size:11.8px;line-height:16px;font-weight:400;color:#000;white-space:pre;transform:scaleX(0.9466);transform-origin:0 0;">23:31:10.60</div>
<div style="position:absolute;left:111.75px;top:78.00px;font-size:11.8px;line-height:16px;font-weight:400;color:#000;white-space:pre;transform:scaleX(0.9016);transform-origin:0 0;">127</div>
<div style="position:absolute;left:133.25px;top:78.00px;font-size:11.8px;line-height:16px;font-weight:400;color:#000;white-space:pre;transform:scaleX(0.9969);transform-origin:0 0;">Агент 'прое34': Скрипт выполнен успешно за 5мс. (5000 баров, время 02.12.2014 23:31:05)</div>
<div style="position:absolute;left:3.00px;top:97.00px;font-size:11.8px;line-height:16px;font-weight:400;color:#000;white-space:pre;transform:scaleX(0.9466);transform-origin:0 0;">23:31:07.08</div>
<div style="position:absolute;left:111.75px;top:97.00px;font-size:11.8px;line-height:16px;font-weight:400;color:#000;white-space:pre;transform:scaleX(0.9016);transform-origin:0 0;">127</div>
<div style="position:absolute;left:133.25px;top:97.00px;font-size:11.8px;line-height:16px;font-weight:400;color:#000;white-space:pre;transform:scaleX(0.9972);transform-origin:0 0;">Агент 'прое34': Скрипт выполнен успешно за 13мс. (5000 баров, время 02.12.2014 23:31:00)</div>
</div>
<div style="position:absolute;left:1261px;top:826px;width:17px;height:112px;background:#f0f0f0"></div>
<div style="position:absolute;left:1261px;top:843px;width:17px;height:8px;background:#cdcdcd"></div>
<svg style="position:absolute;left:1265.5px;top:831px" width="8" height="6" viewBox="0 0 8 6"><path d="M0.5 5 L4 1 L7.5 5" fill="none" stroke="#8a8a8a" stroke-width="1.1"/></svg>
<svg style="position:absolute;left:1265.5px;top:927px" width="8" height="6" viewBox="0 0 8 6"><path d="M0.5 1 L4 5 L7.5 1" fill="none" stroke="#8a8a8a" stroke-width="1.1"/></svg>
<div style="position:absolute;left:1px;top:938px;width:1277px;height:16.5px;background:#f7f9fd"></div>
<svg style="position:absolute;left:7.5px;top:943px" width="5" height="8" viewBox="0 0 5 8"><path d="M4.5 0 L0 4 L4.5 8Z" fill="#3e5278"/></svg>
<svg style="position:absolute;left:1268px;top:943px" width="5" height="8" viewBox="0 0 5 8"><path d="M0 0 L4.5 4 L0 8Z" fill="#3e5278"/></svg>
<div style="position:absolute;left:0px;top:955px;width:1280px;height:29px;background:#f0eeee"></div>
<div style="position:absolute;left:102.5px;top:958.5px;width:1px;height:23px;background:#5c5c5c"></div>
<div style="position:absolute;left:177.5px;top:958.5px;width:1px;height:23px;background:#5c5c5c"></div>
<div style="position:absolute;left:382.3px;top:958.5px;width:1px;height:23px;background:#5c5c5c"></div>
<div style="position:absolute;left:411.4px;top:958.5px;width:1px;height:23px;background:#5c5c5c"></div>
<div style="position:absolute;left:512.3px;top:958.5px;width:1px;height:23px;background:#5c5c5c"></div>
<div style="position:absolute;left:3.00px;top:962.00px;font-size:11.8px;line-height:16px;font-weight:400;color:#111;white-space:pre;transform:scaleX(1.0380);transform-origin:0 0;">Подключен</div>
<div style="position:absolute;left:183.75px;top:963.00px;font-size:10.6px;line-height:14px;font-weight:400;color:#111;white-space:pre;transform:scaleX(1.2140);transform-origin:0 0;">02.12.2014 23:31:31</div>
<div style="position:absolute;left:388px;top:961.5px;width:18px;height:17px;background:#7f8a7f;border:1.5px solid #8f9a92;border-radius:3px"></div>
<div style="position:absolute;left:391.5px;top:964px;width:11px;height:12.5px;background:#f2f4f8;border-radius:1px"></div>
<div style="position:absolute;left:543.5px;top:959.5px;width:48.5px;height:21.5px;background:#f6f6f6;border:1px solid #9a9a9a;border-radius:2px 8px 0 0"></div>
<div style="position:absolute;left:591.5px;top:959.5px;width:49px;height:21.5px;background:#f6f6f6;border:1px solid #9a9a9a;border-radius:2px 8px 0 0"></div>
<div style="position:absolute;left:640px;top:959.5px;width:49px;height:21.5px;background:#fff;border:1.5px solid #8a8a8a;border-bottom:none;border-radius:2px 8px 0 0"></div>
<div style="position:absolute;left:689.5px;top:959.5px;width:24px;height:21px;background:#dcdcdc;border:1px solid #7c7c7c"></div>
<div style="position:absolute;left:556.00px;top:963.00px;font-size:11.8px;line-height:16px;font-weight:400;color:#111;white-space:pre;transform:scaleX(0.9846);transform-origin:0 0;">Tab1</div>
<div style="position:absolute;left:604.00px;top:963.00px;font-size:11.8px;line-height:16px;font-weight:400;color:#111;white-space:pre;transform:scaleX(0.9963);transform-origin:0 0;">Tab2</div>
<div style="position:absolute;left:653.00px;top:964.00px;font-size:11.8px;line-height:16px;font-weight:400;color:#111;white-space:pre;transform:scaleX(0.9963);transform-origin:0 0;">Tab3</div>
<svg style="position:absolute;left:697px;top:966px" width="9" height="9" viewBox="0 0 9 9"><path d="M4.5 0.5v8M0.5 4.5h8" stroke="#111" stroke-width="1.3"/></svg>
<svg style="position:absolute;left:0;top:984px" width="1280" height="40"><defs><linearGradient id="tg1" x1="0" x2="1"><stop offset="0" stop-color="#c58e38"/><stop offset="0.55" stop-color="#bf8432"/><stop offset="1" stop-color="#b5722c"/></linearGradient><linearGradient id="tg2" x1="0" x2="1"><stop offset="0" stop-color="#a88b44"/><stop offset="1" stop-color="#a0853f"/></linearGradient><linearGradient id="tg3" x1="0" x2="1"><stop offset="0" stop-color="#c6ac7a"/><stop offset="1" stop-color="#bda578"/></linearGradient></defs><rect width="1280" height="40" fill="url(#tg3)"/><polygon points="0,0 615,0 606,40 0,40" fill="url(#tg1)"/><polygon points="615,0 738,0 747,40 606,40" fill="url(#tg2)"/><rect width="1280" height="1" fill="#5a4a20" opacity="0.35"/></svg>
<svg style="position:absolute;left:12px;top:991px" width="26" height="26" viewBox="0 0 26 26"><path d="M0 4 L11 2.3 L11 12.3 L0 12.3Z M12.3 2.1 L26 0 L26 12.3 L12.3 12.3Z M0 13.6 L11 13.6 L11 23.6 L0 22Z M12.3 13.6 L26 13.6 L26 26 L12.3 23.9Z" fill="#fff"/></svg>
<svg style="position:absolute;left:65px;top:992px" width="33" height="27" viewBox="0 0 33 27"><path d="M1 4 Q1 2 3 2 L12 2 L14 4.5 L29 4.5 Q31 4.5 31 6.5 L31 22 L1 22Z" fill="#e8c66a" stroke="#c9a443" stroke-width="0.8"/><rect x="2" y="8" width="28" height="14" fill="#f6e29a"/><rect x="4" y="4" width="5" height="2" fill="#5aa04a"/><rect x="11" y="5" width="5" height="2" fill="#d0503c"/><rect x="19" y="6" width="5" height="2" fill="#3b86c8"/><path d="M5 16 L27 16 L27 26 L22 26 L22 21 L10 21 L10 26 L5 26Z" fill="#6fb6e8" stroke="#3b86c8" stroke-width="0.8"/><rect x="5" y="16" width="22" height="3" fill="#bfe2f8"/></svg>
<svg style="position:absolute;left:128px;top:988px" width="32" height="32" viewBox="0 0 32 32"><circle cx="16" cy="17" r="10.5" fill="none" stroke="#2ea1e4" stroke-width="5.5"/><rect x="14" y="14.5" width="16" height="5" fill="#2ea1e4"/><path d="M16 19.5 L30 19.5 L30 28 L18 30Z" fill="#c08632" opacity="0"/><rect x="19" y="19.5" width="13" height="5" fill="#c18a36"/><path d="M3 27 C-2 17 12 3 27 3 C22 3 9 12 5 25" fill="#f0c020"/><path d="M24 2 C29 1 31 4 28.5 9" fill="none" stroke="#f0c020" stroke-width="2.2"/></svg>
<div style="position:absolute;left:176px;top:985px;width:58px;height:39px;background:#c9a264;border:1px solid #d8b880;border-bottom:none"></div>
<svg style="position:absolute;left:190px;top:989px" width="30" height="32" viewBox="0 0 30 32"><ellipse cx="15" cy="16" rx="13.5" ry="15" fill="#e0282a"/><ellipse cx="15" cy="16" rx="5.2" ry="11" fill="#c9a264"/><ellipse cx="15" cy="16" rx="13.5" ry="15" fill="none" stroke="#b81c1e" stroke-width="1"/><path d="M4 10 C7 3 14 1.5 20 3" stroke="#f48080" stroke-width="1.5" fill="none" opacity="0.7"/></svg>
<div style="position:absolute;left:238px;top:985px;width:58px;height:39px;background:#dcc49c;border:1px solid #ead8b8;border-bottom:none"></div>
<svg style="position:absolute;left:251px;top:988.5px" width="32" height="31" viewBox="0 0 32 31"><rect width="32" height="31" fill="#2b4f72"/><rect x="2.5" y="20" width="4" height="8" fill="#fff"/><rect x="8" y="22" width="4" height="6" fill="#fff"/><rect x="13.5" y="17" width="4" height="11" fill="#fff"/><rect x="19.5" y="12" width="4" height="16" fill="#f2c12e"/><rect x="25.5" y="20" width="4" height="8" fill="#fff"/></svg>
<svg style="position:absolute;left:999px;top:989px" width="32" height="32" viewBox="0 0 32 32"><circle cx="16" cy="16" r="15.5" fill="#0d2c5c"/><circle cx="16" cy="16" r="15.5" fill="none" stroke="#1f5aa8" stroke-width="1.2"/><path d="M2 14 A14.5 14.5 0 0 1 30 14 Z" fill="#1a1a2e" opacity="0.55"/></svg>
<div style="position:absolute;left:1007.50px;top:989.00px;font-size:27px;line-height:32px;font-weight:700;color:#fff;white-space:pre;transform:scaleX(0.9091);transform-origin:0 0;">?</div>
<svg style="position:absolute;left:1044px;top:1001px" width="9" height="5" viewBox="0 0 9 5"><path d="M0 5 L4.5 0 L9 5Z" fill="#fff"/></svg>
<svg style="position:absolute;left:1064px;top:996px" width="16" height="16" viewBox="0 0 16 16"><path d="M1.5 0.5 V15.5" stroke="#fff" stroke-width="1.6"/><path d="M3 1.5 H12 L10 3.5 C12 3.5 14.5 4 15.5 5 C13.5 8 9 8.5 7 8 H3Z" fill="none" stroke="#fff" stroke-width="1.3"/></svg>
<svg style="position:absolute;left:1089px;top:996px" width="16" height="17" viewBox="0 0 16 17"><rect x="8.5" y="2.5" width="6.5" height="13" fill="none" stroke="#fff" stroke-width="1.4"/><rect x="10.5" y="0.8" width="2.5" height="1.8" fill="#fff"/><path d="M1.5 1v4M5.5 1v4" stroke="#fff" stroke-width="1.4"/><rect x="0.5" y="5" width="6" height="4.5" fill="#fff"/><path d="M3.5 9.5v6" stroke="#fff" stroke-width="1.6"/></svg>
<svg style="position:absolute;left:1113px;top:999px" width="16" height="12" viewBox="0 0 16 12"><rect x="0" y="9" width="2.2" height="3" fill="#fff"/><rect x="3.3" y="7" width="2.2" height="5" fill="#fff"/><rect x="6.6" y="5" width="2.2" height="7" fill="#fff"/><rect x="9.9" y="2.5" width="2.2" height="9.5" fill="#fff"/><rect x="13.2" y="0" width="2.2" height="12" fill="#fff"/></svg>
<svg style="position:absolute;left:1139px;top:996px" width="14" height="16" viewBox="0 0 14 16"><path d="M0.8 5.5 H3.5 L8 1 V15 L3.5 10.5 H0.8Z" fill="none" stroke="#fff" stroke-width="1.3"/><path d="M10.5 5 C12 6.5 12 9.5 10.5 11" fill="none" stroke="#fff" stroke-width="1.2"/></svg>
<div style="position:absolute;left:1168.50px;top:999.00px;font-size:11.6px;line-height:14px;font-weight:400;color:#fff;white-space:pre;transform:scaleX(0.9044);transform-origin:0 0;">РУС</div>
<div style="position:absolute;left:1221.00px;top:990.00px;font-size:12.6px;line-height:16px;font-weight:400;color:#fff;white-space:pre;transform:scaleX(0.8409);transform-origin:0 0;">23:31</div>
<div style="position:absolute;left:1207.50px;top:1006.00px;font-size:12.6px;line-height:16px;font-weight:400;color:#fff;white-space:pre;transform:scaleX(0.8488);transform-origin:0 0;">02.12.2014</div>
<svg style="position:absolute;left:0;top:0" width="960" height="780">
<rect x="28.5" y="317.5" width="205.5" height="112" fill="#fff" stroke="#a9a9a9" stroke-width="1"/>
<line x1="42.5" y1="318" x2="42.5" y2="429" stroke="#d9d9d9" stroke-width="1"/>
<line x1="68.3" y1="318" x2="68.3" y2="429" stroke="#d9d9d9" stroke-width="1"/>
<line x1="94.2" y1="318" x2="94.2" y2="429" stroke="#d9d9d9" stroke-width="1"/>
<line x1="120.2" y1="318" x2="120.2" y2="429" stroke="#d9d9d9" stroke-width="1"/>
<line x1="146.2" y1="318" x2="146.2" y2="429" stroke="#d9d9d9" stroke-width="1"/>
<line x1="172.6" y1="318" x2="172.6" y2="429" stroke="#d9d9d9" stroke-width="1"/>
<line x1="198.4" y1="318" x2="198.4" y2="429" stroke="#d9d9d9" stroke-width="1"/>
<line x1="223.9" y1="318" x2="223.9" y2="429" stroke="#d9d9d9" stroke-width="1"/>
<line x1="29" y1="328.5" x2="233.5" y2="328.5" stroke="#d9d9d9" stroke-width="1"/>
<line x1="29" y1="341.6" x2="233.5" y2="341.6" stroke="#d9d9d9" stroke-width="1"/>
<line x1="29" y1="354.3" x2="233.5" y2="354.3" stroke="#d9d9d9" stroke-width="1"/>
<line x1="29" y1="367.1" x2="233.5" y2="367.1" stroke="#d9d9d9" stroke-width="1"/>
<line x1="29" y1="380.3" x2="233.5" y2="380.3" stroke="#d9d9d9" stroke-width="1"/>
<line x1="29" y1="393.0" x2="233.5" y2="393.0" stroke="#d9d9d9" stroke-width="1"/>
<line x1="29" y1="406.3" x2="233.5" y2="406.3" stroke="#d9d9d9" stroke-width="1"/>
<line x1="29" y1="419.0" x2="233.5" y2="419.0" stroke="#d9d9d9" stroke-width="1"/>
<polygon points="31.4,428.7 33.4,392.6 40.7,383.8 47.8,375.9 54.5,370.1 61.5,363.1 68.2,362.7 75.2,368.9 82.2,375.0 89.3,380.7 96.3,387.0 103.3,392.3 110.3,390.0 117.4,385.2 124.4,382.9 131.4,390.0 138.5,397.9 145.5,404.0 152.5,412.0 159.6,411.1 166.2,409.0 173.3,415.8 180.3,422.0 187.2,419.0 194.2,413.0 201.2,406.2 208.3,399.1 215.3,392.1 222.3,385.2 224.3,428.7" fill="#fff3a8" opacity="0.8"/>
<rect x="31.4" y="392.6" width="3.9" height="36.0" fill="#fbb416"/>
<rect x="38.8" y="383.8" width="3.9" height="44.8" fill="#fbb416"/>
<rect x="45.8" y="375.9" width="3.9" height="52.7" fill="#fbb416"/>
<rect x="52.5" y="370.1" width="3.9" height="58.5" fill="#fbb416"/>
<rect x="59.6" y="363.1" width="3.9" height="65.6" fill="#fbb416"/>
<rect x="66.2" y="362.7" width="3.9" height="65.9" fill="#fbb416"/>
<rect x="73.3" y="368.9" width="3.9" height="59.8" fill="#fbb416"/>
<rect x="80.3" y="375.0" width="3.9" height="53.6" fill="#fbb416"/>
<rect x="87.3" y="380.7" width="3.9" height="48.0" fill="#fbb416"/>
<rect x="94.4" y="387.0" width="3.9" height="41.7" fill="#fbb416"/>
<rect x="101.4" y="392.3" width="3.9" height="36.4" fill="#fbb416"/>
<rect x="108.4" y="390.0" width="3.9" height="38.7" fill="#fbb416"/>
<rect x="115.4" y="385.2" width="3.9" height="43.4" fill="#fbb416"/>
<rect x="122.5" y="382.9" width="3.9" height="45.7" fill="#fbb416"/>
<rect x="129.5" y="390.0" width="3.9" height="38.7" fill="#fbb416"/>
<rect x="136.5" y="397.9" width="3.9" height="30.8" fill="#fbb416"/>
<rect x="143.6" y="404.0" width="3.9" height="24.6" fill="#fbb416"/>
<rect x="150.6" y="412.0" width="3.9" height="16.7" fill="#fbb416"/>
<rect x="157.6" y="411.1" width="3.9" height="17.6" fill="#fbb416"/>
<rect x="164.3" y="409.0" width="3.9" height="19.7" fill="#fbb416"/>
<rect x="171.3" y="415.8" width="3.9" height="12.8" fill="#fbb416"/>
<rect x="178.4" y="422.0" width="3.9" height="6.7" fill="#fbb416"/>
<rect x="185.2" y="419.0" width="3.9" height="9.7" fill="#fbb416"/>
<rect x="192.3" y="413.0" width="3.9" height="15.6" fill="#fbb416"/>
<rect x="199.3" y="406.2" width="3.9" height="22.5" fill="#fbb416"/>
<rect x="206.3" y="399.1" width="3.9" height="29.5" fill="#fbb416"/>
<rect x="213.4" y="392.1" width="3.9" height="36.6" fill="#fbb416"/>
<rect x="220.4" y="385.2" width="3.9" height="43.4" fill="#fbb416"/>
<clipPath id="cc"><rect x="29" y="318" width="205" height="111"/></clipPath>
<polyline clip-path="url(#cc)" points="28.8,385.6 56.9,423.4 76.2,401.8 84.7,410.2 121.6,368.9 139.2,383.8 183.5,329.7 227.1,388.7" fill="none" stroke="#1b78d4" stroke-width="3.8" stroke-linejoin="round"/>
<rect x="32" y="319" width="4.3" height="109" fill="#0d7d0d"/>
<rect x="224.8" y="319" width="4.3" height="109" fill="#0d7d0d"/>
<ellipse cx="233.6" cy="387.5" rx="1.2" ry="4" fill="#4a90dd"/>
</svg>
<div style="position:absolute;left:67.5px;top:329px;width:51px;height:15px;background:#fff;border:1px solid #555;box-sizing:border-box"></div>
<div style="position:absolute;left:50px;top:135px;width:160px;height:43px;box-sizing:border-box;border:2px solid #8c9783;border-radius:6px;background:#add8e6;overflow:hidden"></div>
<svg style="position:absolute;left:191px;top:142px" width="11" height="11" viewBox="0 0 10 10"><rect x="0.5" y="0.5" width="9" height="9" rx="1.5" fill="#e8eefa" stroke="#b7c4dc" stroke-width="0.8"/><path d="M2.5 4.8 L5 2.5 L7.5 4.8 M2.5 7.8 L5 5.5 L7.5 7.8" fill="none" stroke="#3b4f9a" stroke-width="1.2"/></svg>

<div style="position:absolute;left:80px;top:201px;width:163px;height:71px;box-sizing:border-box;border:2px solid #8c9783;border-radius:6px;background:#90ee90;overflow:hidden"></div>
<svg style="position:absolute;left:224px;top:207.5px" width="11" height="11" viewBox="0 0 10 10"><rect x="0.5" y="0.5" width="9" height="9" rx="1.5" fill="#e8eefa" stroke="#b7c4dc" stroke-width="0.8"/><path d="M2.5 2.5 L5 4.8 L7.5 2.5 M2.5 5.5 L5 7.8 L7.5 5.5" fill="none" stroke="#3b4f9a" stroke-width="1.2"/></svg>

<div style="position:absolute;left:380.5px;top:196px;width:179.0px;height:48.5px;box-sizing:border-box;border:2px solid #8c9783;border-radius:6px;background:#fafad2;overflow:hidden"><div style="position:absolute;left:0;right:0;bottom:0;height:5px;background:#c2cdbf"></div></div>
<div style="position:absolute;left:385.5px;top:220px;width:169.5px;height:16px;overflow:hidden">
<div style="position:absolute;left:0.00px;top:2.00px;font-size:10.2px;line-height:13px;font-weight:400;color:#000;white-space:pre;transform:scaleX(1.2424);transform-origin:0 0;">Закрытие позиции по take-profit</div>
</div>



<div style="position:absolute;left:368.5px;top:285px;width:191.5px;height:65.5px;box-sizing:border-box;border:2px solid #8c9783;border-radius:6px;background:#ffb6c1;overflow:hidden"><div style="position:absolute;left:0;right:0;bottom:0;height:5px;background:#c2cdbf"></div></div>
<svg style="position:absolute;left:540.5px;top:293px" width="11" height="11" viewBox="0 0 10 10"><rect x="0.5" y="0.5" width="9" height="9" rx="1.5" fill="#e8eefa" stroke="#b7c4dc" stroke-width="0.8"/><path d="M2.5 2.5 L5 4.8 L7.5 2.5 M2.5 5.5 L5 7.8 L7.5 5.5" fill="none" stroke="#3b4f9a" stroke-width="1.2"/></svg>




<div style="position:absolute;left:377px;top:399px;width:178.5px;height:48.5px;box-sizing:border-box;border:2px solid #8c9783;border-radius:6px;background:#fafad2;overflow:hidden"><div style="position:absolute;left:0;right:0;bottom:0;height:5px;background:#c2cdbf"></div></div>
<div style="position:absolute;left:381.25px;top:423px;width:170px;height:16px;overflow:hidden">
<div style="position:absolute;left:0.00px;top:2.00px;font-size:10.2px;line-height:13px;font-weight:400;color:#000;white-space:pre;transform:scaleX(1.2398);transform-origin:0 0;">Закрытие позиции по stop-loss</div>
</div>



<div style="position:absolute;left:651px;top:159px;width:164px;height:72.5px;box-sizing:border-box;border:2px solid #8c9783;border-radius:6px;background:#90ee90;overflow:hidden"></div>
<svg style="position:absolute;left:795.75px;top:166.75px" width="11" height="11" viewBox="0 0 10 10"><rect x="0.5" y="0.5" width="9" height="9" rx="1.5" fill="#e8eefa" stroke="#b7c4dc" stroke-width="0.8"/><path d="M2.5 2.5 L5 4.8 L7.5 2.5 M2.5 5.5 L5 7.8 L7.5 5.5" fill="none" stroke="#3b4f9a" stroke-width="1.2"/></svg>

<div style="position:absolute;left:654px;top:294px;width:90px;height:48.5px;box-sizing:border-box;border:2px solid #8c9783;border-radius:6px;background:#d3d3d3;overflow:hidden"><div style="position:absolute;left:0;right:0;bottom:0;height:5px;background:#c2cdbf"></div></div>


<div style="position:absolute;left:804px;top:284px;width:101.5px;height:65.5px;box-sizing:border-box;border:2px solid #8c9783;border-radius:6px;background:#d3d3d3;overflow:hidden"><div style="position:absolute;left:0;right:0;bottom:0;height:5px;background:#c2cdbf"></div></div>
<svg style="position:absolute;left:886.25px;top:291.25px" width="11" height="11" viewBox="0 0 10 10"><rect x="0.5" y="0.5" width="9" height="9" rx="1.5" fill="#e8eefa" stroke="#b7c4dc" stroke-width="0.8"/><path d="M2.5 2.5 L5 4.8 L7.5 2.5 M2.5 5.5 L5 7.8 L7.5 5.5" fill="none" stroke="#3b4f9a" stroke-width="1.2"/></svg>

<div style="position:absolute;left:646px;top:383px;width:164px;height:72px;box-sizing:border-box;border:2px solid #8c9783;border-radius:6px;background:#90ee90;overflow:hidden"></div>
<svg style="position:absolute;left:790.75px;top:390.75px" width="11" height="11" viewBox="0 0 10 10"><rect x="0.5" y="0.5" width="9" height="9" rx="1.5" fill="#e8eefa" stroke="#b7c4dc" stroke-width="0.8"/><path d="M2.5 2.5 L5 4.8 L7.5 2.5 M2.5 5.5 L5 7.8 L7.5 5.5" fill="none" stroke="#3b4f9a" stroke-width="1.2"/></svg>

<div style="position:absolute;left:127px;top:484px;width:101px;height:48px;box-sizing:border-box;border:2px solid #8c9783;border-radius:6px;background:#d3d3d3;overflow:hidden"><div style="position:absolute;left:0;right:0;bottom:0;height:5px;background:#c2cdbf"></div></div>


<div style="position:absolute;left:329.5px;top:480.5px;width:163.0px;height:63.25px;box-sizing:border-box;border:2px solid #8c9783;border-radius:6px;background:#90ee90;overflow:hidden"></div>
<svg style="position:absolute;left:473.25px;top:487.5px" width="11" height="11" viewBox="0 0 10 10"><rect x="0.5" y="0.5" width="9" height="9" rx="1.5" fill="#e8eefa" stroke="#b7c4dc" stroke-width="0.8"/><path d="M2.5 2.5 L5 4.8 L7.5 2.5 M2.5 5.5 L5 7.8 L7.5 5.5" fill="none" stroke="#3b4f9a" stroke-width="1.2"/></svg>

<div style="position:absolute;left:626px;top:497px;width:164px;height:121px;box-sizing:border-box;border:2px solid #8c9783;border-radius:6px;background:#90ee90;overflow:hidden"></div>
<svg style="position:absolute;left:770.5px;top:503.75px" width="11" height="11" viewBox="0 0 10 10"><rect x="0.5" y="0.5" width="9" height="9" rx="1.5" fill="#e8eefa" stroke="#b7c4dc" stroke-width="0.8"/><path d="M2.5 2.5 L5 4.8 L7.5 2.5 M2.5 5.5 L5 7.8 L7.5 5.5" fill="none" stroke="#3b4f9a" stroke-width="1.2"/></svg>

<div style="position:absolute;left:144px;top:565.5px;width:162px;height:62.5px;box-sizing:border-box;border:2px solid #8c9783;border-radius:6px;background:#90ee90;overflow:hidden"></div>
<svg style="position:absolute;left:287.5px;top:572.5px" width="11" height="11" viewBox="0 0 10 10"><rect x="0.5" y="0.5" width="9" height="9" rx="1.5" fill="#e8eefa" stroke="#b7c4dc" stroke-width="0.8"/><path d="M2.5 2.5 L5 4.8 L7.5 2.5 M2.5 5.5 L5 7.8 L7.5 5.5" fill="none" stroke="#3b4f9a" stroke-width="1.2"/></svg>

<div style="position:absolute;left:149.5px;top:647.5px;width:163.0px;height:62.5px;box-sizing:border-box;border:2px solid #8c9783;border-radius:6px;background:#90ee90;overflow:hidden"></div>
<svg style="position:absolute;left:293.75px;top:654.5px" width="11" height="11" viewBox="0 0 10 10"><rect x="0.5" y="0.5" width="9" height="9" rx="1.5" fill="#e8eefa" stroke="#b7c4dc" stroke-width="0.8"/><path d="M2.5 2.5 L5 4.8 L7.5 2.5 M2.5 5.5 L5 7.8 L7.5 5.5" fill="none" stroke="#3b4f9a" stroke-width="1.2"/></svg>

<div style="position:absolute;left:422.5px;top:587px;width:142.5px;height:48px;box-sizing:border-box;border:2px solid #8c9783;border-radius:6px;background:#ffff00;overflow:hidden"><div style="position:absolute;left:0;right:0;bottom:0;height:5px;background:#c2cdbf"></div></div>




<div style="position:absolute;left:429.5px;top:657.5px;width:101.5px;height:65.0px;box-sizing:border-box;border:2px solid #8c9783;border-radius:6px;background:#d3d3d3;overflow:hidden"><div style="position:absolute;left:0;right:0;bottom:0;height:5px;background:#c2cdbf"></div></div>
<svg style="position:absolute;left:512.5px;top:665.5px" width="11" height="11" viewBox="0 0 10 10"><rect x="0.5" y="0.5" width="9" height="9" rx="1.5" fill="#e8eefa" stroke="#b7c4dc" stroke-width="0.8"/><path d="M2.5 2.5 L5 4.8 L7.5 2.5 M2.5 5.5 L5 7.8 L7.5 5.5" fill="none" stroke="#3b4f9a" stroke-width="1.2"/></svg>

<div style="position:absolute;left:55.50px;top:140.00px;font-size:10.2px;line-height:13px;font-weight:400;color:#000;white-space:pre;transform:scaleX(1.2100);transform-origin:0 0;">Источник1</div>
<div style="position:absolute;left:54.50px;top:161.00px;font-size:10.2px;line-height:13px;font-weight:400;color:#000;white-space:pre;transform:scaleX(1.2258);transform-origin:0 0;">Источник (инструмент)</div>
<div style="position:absolute;left:84.50px;top:206.00px;font-size:10.2px;line-height:13px;font-weight:400;color:#000;white-space:pre;transform:scaleX(1.0586);transform-origin:0 0;">ХРОМАЕТ</div>
<div style="position:absolute;left:84.00px;top:225.00px;font-size:10.2px;line-height:13px;font-weight:400;color:#000;white-space:pre;transform:scaleX(1.2019);transform-origin:0 0;">Логическая формула</div>
<div style="position:absolute;left:85.50px;top:242.00px;font-size:10.2px;line-height:13px;font-weight:400;color:#000;white-space:pre;transform:scaleX(1.3182);transform-origin:0 0;">up==0||up&gt;4&amp;&amp;up&lt;5</div>
<div style="position:absolute;left:386.25px;top:202.00px;font-size:10.2px;line-height:13px;font-weight:700;color:#000;white-space:pre;transform:scaleX(1.2759);transform-origin:0 0;">ЗакПозПоТакPro1</div>
<div style="position:absolute;left:374.70px;top:292.00px;font-size:10.2px;line-height:13px;font-weight:700;color:#000;white-space:pre;transform:scaleX(1.2461);transform-origin:0 0;">ОткрПозиПоРынк1</div>
<div style="position:absolute;left:373.75px;top:311.00px;font-size:10.2px;line-height:13px;font-weight:400;color:#000;white-space:pre;transform:scaleX(1.2263);transform-origin:0 0;">Открытие позиции по рынку</div>
<div style="position:absolute;left:371.00px;top:328.00px;font-size:10.2px;line-height:13px;font-weight:400;color:#000;white-space:pre;transform:scaleX(1.2068);transform-origin:0 0;">Покупка</div>
<div style="position:absolute;left:436.50px;top:328.00px;font-size:10.2px;line-height:13px;font-weight:400;color:#000;white-space:pre;transform:scaleX(1.1130);transform-origin:0 0;">Да</div>
<div style="position:absolute;left:382.50px;top:406.00px;font-size:10.2px;line-height:13px;font-weight:700;color:#000;white-space:pre;transform:scaleX(1.2366);transform-origin:0 0;">ЗакПозПоStoLos1</div>
<div style="position:absolute;left:656.75px;top:165.00px;font-size:10.2px;line-height:13px;font-weight:400;color:#000;white-space:pre;transform:scaleX(1.1635);transform-origin:0 0;">Формула2</div>
<div style="position:absolute;left:656.50px;top:184.00px;font-size:10.2px;line-height:13px;font-weight:400;color:#000;white-space:pre;transform:scaleX(1.1479);transform-origin:0 0;">Формула</div>
<div style="position:absolute;left:657.50px;top:201.00px;font-size:10.2px;line-height:13px;font-weight:400;color:#000;white-space:pre;transform:scaleX(1.2029);transform-origin:0 0;">ЦенаВхода1+Константа1</div>
<div style="position:absolute;left:660.50px;top:300.00px;font-size:10.2px;line-height:13px;font-weight:700;color:#000;white-space:pre;transform:scaleX(1.2423);transform-origin:0 0;">ЦенаВхода1</div>
<div style="position:absolute;left:659.50px;top:320.00px;font-size:10.2px;line-height:13px;font-weight:400;color:#000;white-space:pre;transform:scaleX(1.1687);transform-origin:0 0;">Цена Входа</div>
<div style="position:absolute;left:809.50px;top:290.00px;font-size:10.2px;line-height:13px;font-weight:700;color:#000;white-space:pre;transform:scaleX(1.2415);transform-origin:0 0;">Константа1</div>
<div style="position:absolute;left:808.25px;top:310.00px;font-size:10.2px;line-height:13px;font-weight:400;color:#000;white-space:pre;transform:scaleX(1.1986);transform-origin:0 0;">Константа</div>
<div style="position:absolute;left:805.50px;top:326.00px;font-size:10.2px;line-height:13px;font-weight:400;color:#000;white-space:pre;transform:scaleX(1.1784);transform-origin:0 0;">Значение</div>
<div style="position:absolute;left:879.25px;top:326.00px;font-size:10.2px;line-height:13px;font-weight:400;color:#000;white-space:pre;transform:scaleX(1.1240);transform-origin:0 0;">50</div>
<div style="position:absolute;left:651.75px;top:389.00px;font-size:10.2px;line-height:13px;font-weight:400;color:#000;white-space:pre;transform:scaleX(1.1532);transform-origin:0 0;">Формула1</div>
<div style="position:absolute;left:651.50px;top:408.00px;font-size:10.2px;line-height:13px;font-weight:400;color:#000;white-space:pre;transform:scaleX(1.1537);transform-origin:0 0;">Формула</div>
<div style="position:absolute;left:652.50px;top:424.00px;font-size:10.2px;line-height:13px;font-weight:400;color:#000;white-space:pre;transform:scaleX(1.1908);transform-origin:0 0;">ЦенаВхода1-Константа1</div>
<div style="position:absolute;left:132.50px;top:490.00px;font-size:10.2px;line-height:13px;font-weight:700;color:#000;white-space:pre;transform:scaleX(1.2045);transform-origin:0 0;">up</div>
<div style="position:absolute;left:131.25px;top:510.00px;font-size:10.2px;line-height:13px;font-weight:400;color:#000;white-space:pre;transform:scaleX(1.1933);transform-origin:0 0;">Убытков подряд</div>
<div style="position:absolute;left:334.50px;top:486.00px;font-size:10.2px;line-height:13px;font-weight:400;color:#000;white-space:pre;transform:scaleX(1.1635);transform-origin:0 0;">Формула3</div>
<div style="position:absolute;left:334.50px;top:504.00px;font-size:10.2px;line-height:13px;font-weight:400;color:#000;white-space:pre;transform:scaleX(1.1420);transform-origin:0 0;">Формула</div>
<div style="position:absolute;left:335.50px;top:522.00px;font-size:10.2px;line-height:13px;font-weight:400;color:#000;white-space:pre;transform:scaleX(1.1935);transform-origin:0 0;">OZ+1</div>
<div style="position:absolute;left:631.00px;top:502.00px;font-size:10.2px;line-height:13px;font-weight:400;color:#000;white-space:pre;transform:scaleX(1.1271);transform-origin:0 0;">IfELSE</div>
<div style="position:absolute;left:631.50px;top:521.00px;font-size:10.2px;line-height:13px;font-weight:400;color:#000;white-space:pre;transform:scaleX(1.1479);transform-origin:0 0;">Формула</div>
<div style="position:absolute;left:632.50px;top:538.00px;font-size:10.2px;line-height:13px;font-weight:400;color:#000;white-space:pre;transform:scaleX(1.2224);transform-origin:0 0;">Формула3&gt;=5?</div>
<div style="position:absolute;left:632.50px;top:550.00px;font-size:10.2px;line-height:13px;font-weight:400;color:#000;white-space:pre;transform:scaleX(1.1999);transform-origin:0 0;">Константа2:Формула3</div>
<div style="position:absolute;left:148.25px;top:571.00px;font-size:10.2px;line-height:13px;font-weight:400;color:#000;white-space:pre;transform:scaleX(1.1895);transform-origin:0 0;">ЛогичесФормула2</div>
<div style="position:absolute;left:148.25px;top:590.00px;font-size:10.2px;line-height:13px;font-weight:400;color:#000;white-space:pre;transform:scaleX(1.1894);transform-origin:0 0;">Логическая формула</div>
<div style="position:absolute;left:149.50px;top:606.00px;font-size:10.2px;line-height:13px;font-weight:400;color:#000;white-space:pre;transform:scaleX(1.2526);transform-origin:0 0;">up&gt;1</div>
<div style="position:absolute;left:154.25px;top:652.00px;font-size:10.2px;line-height:13px;font-weight:400;color:#000;white-space:pre;transform:scaleX(1.1895);transform-origin:0 0;">ЛогичесФормула3</div>
<div style="position:absolute;left:154.25px;top:672.00px;font-size:10.2px;line-height:13px;font-weight:400;color:#000;white-space:pre;transform:scaleX(1.1894);transform-origin:0 0;">Логическая формула</div>
<div style="position:absolute;left:155.50px;top:688.00px;font-size:10.2px;line-height:13px;font-weight:400;color:#000;white-space:pre;transform:scaleX(1.3059);transform-origin:0 0;">up==0</div>
<div style="position:absolute;left:428.25px;top:592.00px;font-size:10.2px;line-height:13px;font-weight:700;color:#000;white-space:pre;transform:scaleX(1.1832);transform-origin:0 0;">OZ</div>
<div style="position:absolute;left:427.50px;top:612.00px;font-size:10.2px;line-height:13px;font-weight:400;color:#000;white-space:pre;transform:scaleX(1.1807);transform-origin:0 0;">Обновляемое значение</div>
<div style="position:absolute;left:435.50px;top:664.00px;font-size:10.2px;line-height:13px;font-weight:700;color:#000;white-space:pre;transform:scaleX(1.2546);transform-origin:0 0;">Константа2</div>
<div style="position:absolute;left:434.25px;top:684.00px;font-size:10.2px;line-height:13px;font-weight:400;color:#000;white-space:pre;transform:scaleX(1.1882);transform-origin:0 0;">Константа</div>
<div style="position:absolute;left:431.25px;top:700.00px;font-size:10.2px;line-height:13px;font-weight:400;color:#000;white-space:pre;transform:scaleX(1.1895);transform-origin:0 0;">Значение</div>
<div style="position:absolute;left:511.75px;top:700.00px;font-size:10.2px;line-height:13px;font-weight:400;color:#000;white-space:pre;transform:scaleX(1.0138);transform-origin:0 0;">5</div>
<div style="position:absolute;left:70.60px;top:330.00px;font-size:11.5px;line-height:14px;font-weight:400;color:#333;white-space:pre;transform:scaleX(1.0438);transform-origin:0 0;">Главная</div>
<svg style="position:absolute;left:0;top:0;overflow:visible" width="1280" height="800"><polyline points="220,156 230,156" fill="none" stroke="#adadad" stroke-width="1"/><polyline points="230,156 350,306" fill="none" stroke="#adadad" stroke-width="1"/><polyline points="230,156 108,508" fill="none" stroke="#adadad" stroke-width="1"/><polyline points="230,156 217.5,374" fill="none" stroke="#aeaee2" stroke-width="1"/><polyline points="251,236 261,236" fill="none" stroke="#aeaee2" stroke-width="1"/><polyline points="261,236 40,391" fill="none" stroke="#aeaee2" stroke-width="1"/><polyline points="238,508 248,508" fill="none" stroke="#adadad" stroke-width="1"/><polyline points="248,508 177.5,276" fill="none" stroke="#adadad" stroke-width="1"/><polyline points="248,508 236.5,560" fill="none" stroke="#adadad" stroke-width="1"/><polyline points="248,508 238,642" fill="none" stroke="#adadad" stroke-width="1"/><polyline points="570,318 580,318" fill="none" stroke="#8e8e8e" stroke-width="1.6"/><polyline points="580,318 636,318" fill="none" stroke="#c4c4c4" stroke-width="2"/><polyline points="580,318 380,221" fill="none" stroke="#adadad" stroke-width="1"/><polyline points="580,318 376,408" fill="none" stroke="#adadad" stroke-width="1"/><polyline points="823,195 834,195" fill="none" stroke="#adadad" stroke-width="1"/><polyline points="834,195 362,233" fill="none" stroke="#adadad" stroke-width="1"/><polyline points="818,419 829,419" fill="none" stroke="#adadad" stroke-width="1"/><polyline points="829,419 358,436" fill="none" stroke="#adadad" stroke-width="1"/><polyline points="798,557 808,557" fill="none" stroke="#adadad" stroke-width="1"/><polyline points="808,557 350,331" fill="none" stroke="#adadad" stroke-width="1"/><polyline points="754,318 764,318" fill="none" stroke="#adadad" stroke-width="1"/><polyline points="764,318 747,238" fill="none" stroke="#adadad" stroke-width="1"/><polyline points="764,318 745,377" fill="none" stroke="#adadad" stroke-width="1"/><polyline points="916,316 925.5,316" fill="none" stroke="#adadad" stroke-width="1"/><polyline points="925.5,316 799,238" fill="none" stroke="#adadad" stroke-width="1"/><polyline points="925.5,316 805.5,376.5" fill="none" stroke="#adadad" stroke-width="1"/><polyline points="501,512 511,512" fill="none" stroke="#adadad" stroke-width="1"/><polyline points="511,512 404,598" fill="none" stroke="#adadad" stroke-width="1"/><polyline points="511,512 619,535.5" fill="none" stroke="#adadad" stroke-width="1"/><polyline points="576,611 586,611" fill="none" stroke="#adadad" stroke-width="1"/><polyline points="586,610.5 475,550" fill="none" stroke="#adadad" stroke-width="1"/><polyline points="315,597 325,597 404,611" fill="none" stroke="#adadad" stroke-width="1"/><polyline points="321,679 331,679 404,623" fill="none" stroke="#adadad" stroke-width="1"/><polyline points="542,690 551,690 636,620.5" fill="none" stroke="#111" stroke-width="1.6"/><polygon points="362,204.5 370,209 362,213.5" fill="#000"/><polygon points="362,228.5 370,233 362,237.5" fill="#000"/><polygon points="350,301.5 358,306 350,310.5" fill="#000"/><polygon points="350,325.5 358,330 350,334.5" fill="#000"/><polygon points="358,408.0 366,412.5 358,417.0" fill="#000"/><polygon points="358,432.0 366,436.5 358,441.0" fill="#000"/><polygon points="636,313.5 644,318 636,322.5" fill="#000"/><polygon points="108,503.5 116,508 108,512.5" fill="#000"/><polygon points="404,594.0 412,598.5 404,603.0" fill="#000"/><polygon points="404,606.5 412,611 404,615.5" fill="#000"/><polygon points="404,618.5 412,623 404,627.5" fill="#000"/><polygon points="176.7,272.7 183.5,279.5 174.9,282.1" fill="#000"/><polygon points="235.7,565.0 233.2,556.3 241.6,558.1" fill="#000"/><polygon points="237.2,647.0 233.5,638.7 242.1,639.4" fill="#000"/><polygon points="745.5,231.6 751.7,239.0 742.9,240.9" fill="#000"/><polygon points="743.4,383.0 741.7,373.5 750.3,376.3" fill="#000"/><polygon points="793.7,231.5 803.2,231.5 798.4,239.3" fill="#000"/><polygon points="800.4,382.7 808.9,382.7 804.6,375.2" fill="#000"/><polygon points="627.0,537.5 617.3,539.7 619.1,531.5" fill="#000"/><polygon points="470.4,543.5 479.2,543.5 474.5,551.2" fill="#000"/><polygon points="637.0,619.5 632.1,629.3 626.4,622.4" fill="#000"/><polygon points="225.0,374.0 216.0,378.2 216.0,369.8" fill="#000"/><polygon points="36.0,391.0 45.0,386.8 45.0,395.2" fill="#000"/></svg>
<div style="position:absolute;left:210px;top:151px;width:10px;height:10px;background:#0000ff"></div>
<div style="position:absolute;left:241px;top:231px;width:10px;height:10px;background:#0000ff"></div>
<div style="position:absolute;left:370px;top:204px;width:10px;height:10px;background:#ff0000"></div>
<div style="position:absolute;left:370px;top:216px;width:10px;height:10px;background:#ff0000"></div>
<div style="position:absolute;left:370px;top:228px;width:10px;height:10px;background:#ff0000"></div>
<div style="position:absolute;left:560px;top:313px;width:10px;height:10px;background:#0000ff"></div>
<div style="position:absolute;left:358px;top:301px;width:10px;height:10px;background:#ff0000"></div>
<div style="position:absolute;left:358px;top:313px;width:10px;height:10px;background:#ff0000"></div>
<div style="position:absolute;left:358px;top:325px;width:10px;height:10px;background:#ff0000"></div>
<div style="position:absolute;left:366px;top:407.5px;width:10px;height:10px;background:#ff0000"></div>
<div style="position:absolute;left:366px;top:419.5px;width:10px;height:10px;background:#ff0000"></div>
<div style="position:absolute;left:366px;top:431.5px;width:10px;height:10px;background:#ff0000"></div>
<div style="position:absolute;left:813px;top:190px;width:10px;height:10px;background:#0000ff"></div>
<div style="position:absolute;left:644px;top:313px;width:10px;height:10px;background:#ff0000"></div>
<div style="position:absolute;left:744px;top:313px;width:10px;height:10px;background:#0000ff"></div>
<div style="position:absolute;left:906px;top:311px;width:10px;height:10px;background:#0000ff"></div>
<div style="position:absolute;left:808px;top:413.75px;width:10px;height:10px;background:#0000ff"></div>
<div style="position:absolute;left:116px;top:503px;width:10px;height:10px;background:#ff0000"></div>
<div style="position:absolute;left:228px;top:503px;width:10px;height:10px;background:#0000ff"></div>
<div style="position:absolute;left:491px;top:507px;width:10px;height:10px;background:#0000ff"></div>
<div style="position:absolute;left:788px;top:553px;width:10px;height:10px;background:#0000ff"></div>
<div style="position:absolute;left:305px;top:592.5px;width:10px;height:10px;background:#0000ff"></div>
<div style="position:absolute;left:311px;top:674px;width:10px;height:10px;background:#0000ff"></div>
<div style="position:absolute;left:412px;top:593.5px;width:10px;height:10px;background:#ff0000"></div>
<div style="position:absolute;left:412px;top:606px;width:10px;height:10px;background:#ff0000"></div>
<div style="position:absolute;left:412px;top:618px;width:10px;height:10px;background:#ff0000"></div>
<div style="position:absolute;left:566px;top:606px;width:10px;height:10px;background:#0000ff"></div>
<div style="position:absolute;left:532px;top:685px;width:10px;height:10px;background:#0000ff"></div>
<svg style="position:absolute;left:0;top:0;overflow:visible" width="1280" height="800"><ellipse cx="170.5" cy="227.7" rx="141.25" ry="109.6" fill="none" stroke="#000" stroke-width="5"/></svg>
</body></html>
